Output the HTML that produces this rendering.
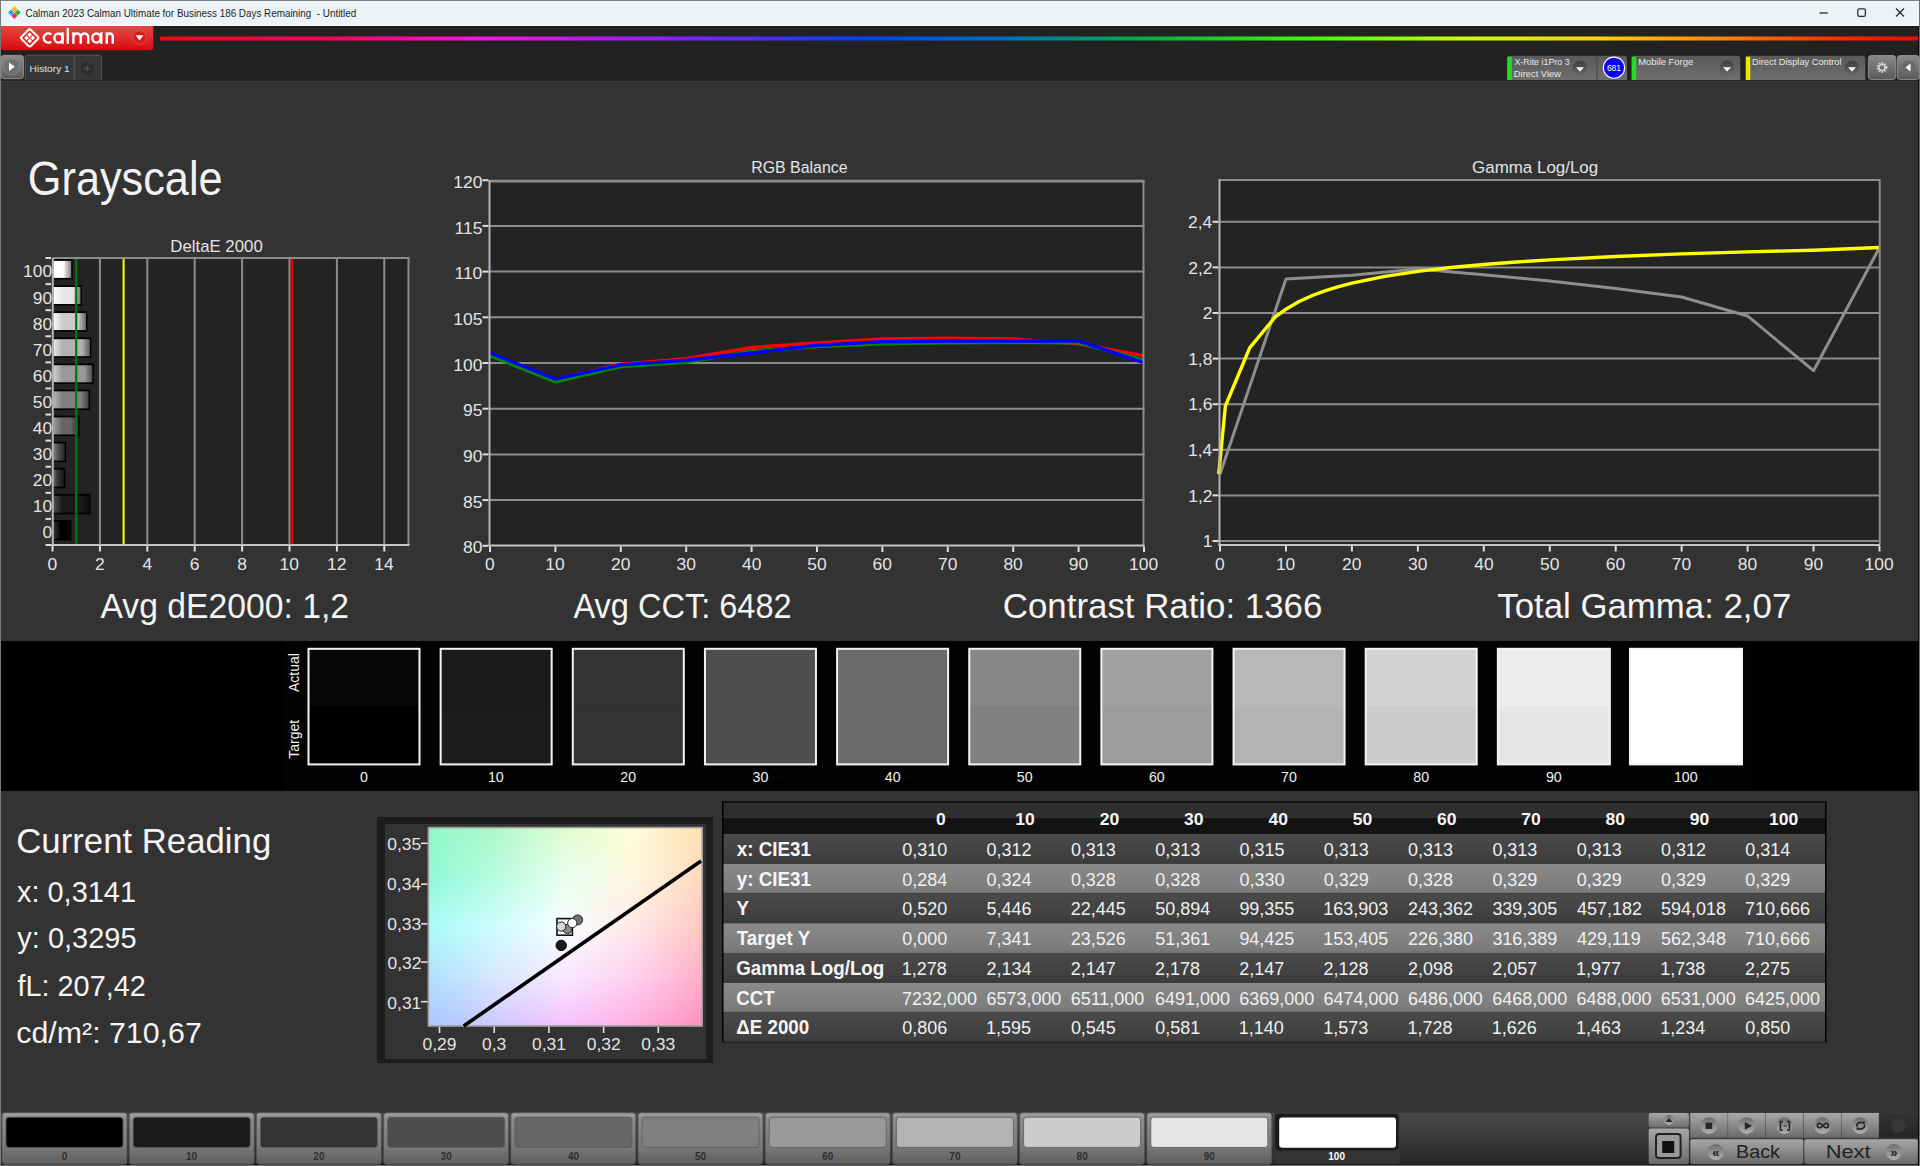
<!DOCTYPE html><html><head><meta charset="utf-8"><style>html,body{margin:0;padding:0;background:#333;overflow:hidden;width:1920px;height:1166px}svg{display:block;font-family:"Liberation Sans",sans-serif}</style></head><body><svg width="1920" height="1166" viewBox="0 0 1920 1166"><defs><linearGradient id="gRed" x1="0" y1="0" x2="0" y2="1"><stop offset="0" stop-color="#e64646"/><stop offset="0.5" stop-color="#e02a2c"/><stop offset="1" stop-color="#d40a0c"/></linearGradient><linearGradient id="gRain" x1="0" y1="0" x2="1" y2="0"><stop offset="0" stop-color="#ff0010"/><stop offset="0.1" stop-color="#ff0060"/><stop offset="0.18" stop-color="#ff10e0"/><stop offset="0.3" stop-color="#8020ff"/><stop offset="0.4" stop-color="#0040ff"/><stop offset="0.48" stop-color="#0070c0"/><stop offset="0.56" stop-color="#00b040"/><stop offset="0.66" stop-color="#40ff00"/><stop offset="0.74" stop-color="#c8ff00"/><stop offset="0.82" stop-color="#ffd000"/><stop offset="0.89" stop-color="#ff8000"/><stop offset="0.95" stop-color="#ff3000"/><stop offset="1" stop-color="#ff0000"/></linearGradient><linearGradient id="gPlay" x1="0" y1="0" x2="0" y2="1"><stop offset="0" stop-color="#8a8a8a"/><stop offset="1" stop-color="#5e5e5e"/></linearGradient><linearGradient id="gDev" x1="0" y1="0" x2="0" y2="1"><stop offset="0" stop-color="#5a5a5a"/><stop offset="1" stop-color="#6e6e6e"/></linearGradient><linearGradient id="gDrop" x1="0" y1="0" x2="0" y2="1"><stop offset="0" stop-color="#3e3e3e"/><stop offset="1" stop-color="#6a6a6a"/></linearGradient><linearGradient id="gBtn" x1="0" y1="0" x2="0" y2="1"><stop offset="0" stop-color="#8a8a8a"/><stop offset="1" stop-color="#5a5a5a"/></linearGradient><linearGradient id="gBar100" x1="0" y1="0" x2="1" y2="0"><stop offset="0" stop-color="rgb(255,255,255)"/><stop offset="0.45" stop-color="rgb(255,255,255)"/><stop offset="0.5526977914453454" stop-color="rgb(255,255,255)"/><stop offset="1" stop-color="rgb(127,127,127)"/></linearGradient><linearGradient id="gBar90" x1="0" y1="0" x2="1" y2="0"><stop offset="0" stop-color="rgb(255,255,255)"/><stop offset="0.3316211854351974" stop-color="rgb(230,230,230)"/><stop offset="0.7052256129464912" stop-color="rgb(230,230,230)"/><stop offset="1" stop-color="rgb(115,115,115)"/></linearGradient><linearGradient id="gBar80" x1="0" y1="0" x2="1" y2="0"><stop offset="0" stop-color="rgb(255,255,255)"/><stop offset="0.2755807865075646" stop-color="rgb(204,204,204)"/><stop offset="0.7550393008821648" stop-color="rgb(204,204,204)"/><stop offset="1" stop-color="rgb(102,102,102)"/></linearGradient><linearGradient id="gBar70" x1="0" y1="0" x2="1" y2="0"><stop offset="0" stop-color="rgb(233,233,233)"/><stop offset="0.24599170187992322" stop-color="rgb(178,178,178)"/><stop offset="0.7813407094400683" stop-color="rgb(178,178,178)"/><stop offset="1" stop-color="rgb(89,89,89)"/></linearGradient><linearGradient id="gBar60" x1="0" y1="0" x2="1" y2="0"><stop offset="0" stop-color="rgb(208,208,208)"/><stop offset="0.2305044461746506" stop-color="rgb(153,153,153)"/><stop offset="0.7951071589558661" stop-color="rgb(153,153,153)"/><stop offset="1" stop-color="rgb(76,76,76)"/></linearGradient><linearGradient id="gBar50" x1="0" y1="0" x2="1" y2="0"><stop offset="0" stop-color="rgb(183,183,183)"/><stop offset="0.25489035466576787" stop-color="rgb(128,128,128)"/><stop offset="0.7734307958526507" stop-color="rgb(128,128,128)"/><stop offset="1" stop-color="rgb(64,64,64)"/></linearGradient><linearGradient id="gBar40" x1="0" y1="0" x2="1" y2="0"><stop offset="0" stop-color="rgb(157,157,157)"/><stop offset="0.36182359089812643" stop-color="rgb(102,102,102)"/><stop offset="0.6783790303127765" stop-color="rgb(102,102,102)"/><stop offset="1" stop-color="rgb(51,51,51)"/></linearGradient><linearGradient id="gBar30" x1="0" y1="0" x2="1" y2="0"><stop offset="0" stop-color="rgb(131,131,131)"/><stop offset="0.45" stop-color="rgb(76,76,76)"/><stop offset="0.46" stop-color="rgb(76,76,76)"/><stop offset="1" stop-color="rgb(38,38,38)"/></linearGradient><linearGradient id="gBar20" x1="0" y1="0" x2="1" y2="0"><stop offset="0" stop-color="rgb(106,106,106)"/><stop offset="0.45" stop-color="rgb(51,51,51)"/><stop offset="0.46" stop-color="rgb(51,51,51)"/><stop offset="1" stop-color="rgb(25,25,25)"/></linearGradient><linearGradient id="gBar10" x1="0" y1="0" x2="1" y2="0"><stop offset="0" stop-color="rgb(81,81,81)"/><stop offset="0.2511195747708534" stop-color="rgb(26,26,26)"/><stop offset="0.7767826002036858" stop-color="rgb(26,26,26)"/><stop offset="1" stop-color="rgb(13,13,13)"/></linearGradient><linearGradient id="gBar0" x1="0" y1="0" x2="1" y2="0"><stop offset="0" stop-color="rgb(55,55,55)"/><stop offset="0.45" stop-color="rgb(0,0,0)"/><stop offset="0.5245057831984119" stop-color="rgb(0,0,0)"/><stop offset="1" stop-color="rgb(0,0,0)"/></linearGradient><linearGradient id="gCie0" x1="0" y1="0" x2="1" y2="0"><stop offset="0.0" stop-color="rgb(143,248,200)"/><stop offset="0.25" stop-color="rgb(176,248,201)"/><stop offset="0.5" stop-color="rgb(224,252,209)"/><stop offset="0.75" stop-color="rgb(255,252,216)"/><stop offset="1.0" stop-color="rgb(255,224,176)"/></linearGradient><linearGradient id="gCie1" x1="0" y1="0" x2="1" y2="0"><stop offset="0.0" stop-color="rgb(143,248,202)"/><stop offset="0.25" stop-color="rgb(177,248,203)"/><stop offset="0.5" stop-color="rgb(225,252,211)"/><stop offset="0.75" stop-color="rgb(255,252,217)"/><stop offset="1.0" stop-color="rgb(255,223,178)"/></linearGradient><linearGradient id="gCie2" x1="0" y1="0" x2="1" y2="0"><stop offset="0.0" stop-color="rgb(143,248,203)"/><stop offset="0.25" stop-color="rgb(178,249,205)"/><stop offset="0.5" stop-color="rgb(226,253,214)"/><stop offset="0.75" stop-color="rgb(255,251,218)"/><stop offset="1.0" stop-color="rgb(255,222,179)"/></linearGradient><linearGradient id="gCie3" x1="0" y1="0" x2="1" y2="0"><stop offset="0.0" stop-color="rgb(143,248,204)"/><stop offset="0.25" stop-color="rgb(178,249,206)"/><stop offset="0.5" stop-color="rgb(226,253,217)"/><stop offset="0.75" stop-color="rgb(255,251,218)"/><stop offset="1.0" stop-color="rgb(255,222,180)"/></linearGradient><linearGradient id="gCie4" x1="0" y1="0" x2="1" y2="0"><stop offset="0.0" stop-color="rgb(143,248,206)"/><stop offset="0.25" stop-color="rgb(179,249,208)"/><stop offset="0.5" stop-color="rgb(227,253,219)"/><stop offset="0.75" stop-color="rgb(255,251,219)"/><stop offset="1.0" stop-color="rgb(255,221,182)"/></linearGradient><linearGradient id="gCie5" x1="0" y1="0" x2="1" y2="0"><stop offset="0.0" stop-color="rgb(143,248,207)"/><stop offset="0.25" stop-color="rgb(179,250,210)"/><stop offset="0.5" stop-color="rgb(227,253,222)"/><stop offset="0.75" stop-color="rgb(255,250,219)"/><stop offset="1.0" stop-color="rgb(255,221,183)"/></linearGradient><linearGradient id="gCie6" x1="0" y1="0" x2="1" y2="0"><stop offset="0.0" stop-color="rgb(144,248,208)"/><stop offset="0.25" stop-color="rgb(180,250,212)"/><stop offset="0.5" stop-color="rgb(228,254,224)"/><stop offset="0.75" stop-color="rgb(255,250,220)"/><stop offset="1.0" stop-color="rgb(255,220,184)"/></linearGradient><linearGradient id="gCie7" x1="0" y1="0" x2="1" y2="0"><stop offset="0.0" stop-color="rgb(144,248,209)"/><stop offset="0.25" stop-color="rgb(181,250,214)"/><stop offset="0.5" stop-color="rgb(229,254,227)"/><stop offset="0.75" stop-color="rgb(255,250,221)"/><stop offset="1.0" stop-color="rgb(255,219,185)"/></linearGradient><linearGradient id="gCie8" x1="0" y1="0" x2="1" y2="0"><stop offset="0.0" stop-color="rgb(144,248,211)"/><stop offset="0.25" stop-color="rgb(181,251,216)"/><stop offset="0.5" stop-color="rgb(229,254,230)"/><stop offset="0.75" stop-color="rgb(255,249,221)"/><stop offset="1.0" stop-color="rgb(255,219,187)"/></linearGradient><linearGradient id="gCie9" x1="0" y1="0" x2="1" y2="0"><stop offset="0.0" stop-color="rgb(144,248,212)"/><stop offset="0.25" stop-color="rgb(182,251,218)"/><stop offset="0.5" stop-color="rgb(230,254,232)"/><stop offset="0.75" stop-color="rgb(255,249,222)"/><stop offset="1.0" stop-color="rgb(255,218,188)"/></linearGradient><linearGradient id="gCie10" x1="0" y1="0" x2="1" y2="0"><stop offset="0.0" stop-color="rgb(144,248,213)"/><stop offset="0.25" stop-color="rgb(183,251,220)"/><stop offset="0.5" stop-color="rgb(231,255,235)"/><stop offset="0.75" stop-color="rgb(255,249,223)"/><stop offset="1.0" stop-color="rgb(255,217,189)"/></linearGradient><linearGradient id="gCie11" x1="0" y1="0" x2="1" y2="0"><stop offset="0.0" stop-color="rgb(144,248,215)"/><stop offset="0.25" stop-color="rgb(183,252,222)"/><stop offset="0.5" stop-color="rgb(231,255,237)"/><stop offset="0.75" stop-color="rgb(255,248,223)"/><stop offset="1.0" stop-color="rgb(255,217,191)"/></linearGradient><linearGradient id="gCie12" x1="0" y1="0" x2="1" y2="0"><stop offset="0.0" stop-color="rgb(144,248,216)"/><stop offset="0.25" stop-color="rgb(184,252,224)"/><stop offset="0.5" stop-color="rgb(232,255,240)"/><stop offset="0.75" stop-color="rgb(255,248,224)"/><stop offset="1.0" stop-color="rgb(255,216,192)"/></linearGradient><linearGradient id="gCie13" x1="0" y1="0" x2="1" y2="0"><stop offset="0.0" stop-color="rgb(146,248,218)"/><stop offset="0.25" stop-color="rgb(186,252,226)"/><stop offset="0.5" stop-color="rgb(233,255,241)"/><stop offset="0.75" stop-color="rgb(255,247,225)"/><stop offset="1.0" stop-color="rgb(255,215,192)"/></linearGradient><linearGradient id="gCie14" x1="0" y1="0" x2="1" y2="0"><stop offset="0.0" stop-color="rgb(148,249,221)"/><stop offset="0.25" stop-color="rgb(188,252,229)"/><stop offset="0.5" stop-color="rgb(235,255,242)"/><stop offset="0.75" stop-color="rgb(255,245,225)"/><stop offset="1.0" stop-color="rgb(255,213,192)"/></linearGradient><linearGradient id="gCie15" x1="0" y1="0" x2="1" y2="0"><stop offset="0.0" stop-color="rgb(150,249,224)"/><stop offset="0.25" stop-color="rgb(190,252,231)"/><stop offset="0.5" stop-color="rgb(236,255,244)"/><stop offset="0.75" stop-color="rgb(255,244,226)"/><stop offset="1.0" stop-color="rgb(255,212,192)"/></linearGradient><linearGradient id="gCie16" x1="0" y1="0" x2="1" y2="0"><stop offset="0.0" stop-color="rgb(152,249,226)"/><stop offset="0.25" stop-color="rgb(192,252,234)"/><stop offset="0.5" stop-color="rgb(237,255,245)"/><stop offset="0.75" stop-color="rgb(255,243,227)"/><stop offset="1.0" stop-color="rgb(255,211,192)"/></linearGradient><linearGradient id="gCie17" x1="0" y1="0" x2="1" y2="0"><stop offset="0.0" stop-color="rgb(154,250,229)"/><stop offset="0.25" stop-color="rgb(194,252,236)"/><stop offset="0.5" stop-color="rgb(238,255,246)"/><stop offset="0.75" stop-color="rgb(255,242,227)"/><stop offset="1.0" stop-color="rgb(255,210,192)"/></linearGradient><linearGradient id="gCie18" x1="0" y1="0" x2="1" y2="0"><stop offset="0.0" stop-color="rgb(156,250,231)"/><stop offset="0.25" stop-color="rgb(196,252,239)"/><stop offset="0.5" stop-color="rgb(240,255,247)"/><stop offset="0.75" stop-color="rgb(255,240,228)"/><stop offset="1.0" stop-color="rgb(255,208,192)"/></linearGradient><linearGradient id="gCie19" x1="0" y1="0" x2="1" y2="0"><stop offset="0.0" stop-color="rgb(157,250,234)"/><stop offset="0.25" stop-color="rgb(197,252,241)"/><stop offset="0.5" stop-color="rgb(241,255,248)"/><stop offset="0.75" stop-color="rgb(255,239,228)"/><stop offset="1.0" stop-color="rgb(255,207,192)"/></linearGradient><linearGradient id="gCie20" x1="0" y1="0" x2="1" y2="0"><stop offset="0.0" stop-color="rgb(159,251,237)"/><stop offset="0.25" stop-color="rgb(199,252,244)"/><stop offset="0.5" stop-color="rgb(242,255,250)"/><stop offset="0.75" stop-color="rgb(255,238,229)"/><stop offset="1.0" stop-color="rgb(255,206,192)"/></linearGradient><linearGradient id="gCie21" x1="0" y1="0" x2="1" y2="0"><stop offset="0.0" stop-color="rgb(161,251,239)"/><stop offset="0.25" stop-color="rgb(201,252,246)"/><stop offset="0.5" stop-color="rgb(244,255,251)"/><stop offset="0.75" stop-color="rgb(255,236,230)"/><stop offset="1.0" stop-color="rgb(255,204,192)"/></linearGradient><linearGradient id="gCie22" x1="0" y1="0" x2="1" y2="0"><stop offset="0.0" stop-color="rgb(163,251,242)"/><stop offset="0.25" stop-color="rgb(203,252,249)"/><stop offset="0.5" stop-color="rgb(245,255,252)"/><stop offset="0.75" stop-color="rgb(255,235,230)"/><stop offset="1.0" stop-color="rgb(255,203,192)"/></linearGradient><linearGradient id="gCie23" x1="0" y1="0" x2="1" y2="0"><stop offset="0.0" stop-color="rgb(165,252,244)"/><stop offset="0.25" stop-color="rgb(205,252,251)"/><stop offset="0.5" stop-color="rgb(246,255,253)"/><stop offset="0.75" stop-color="rgb(255,234,231)"/><stop offset="1.0" stop-color="rgb(255,202,192)"/></linearGradient><linearGradient id="gCie24" x1="0" y1="0" x2="1" y2="0"><stop offset="0.0" stop-color="rgb(167,252,247)"/><stop offset="0.25" stop-color="rgb(207,252,254)"/><stop offset="0.5" stop-color="rgb(247,255,254)"/><stop offset="0.75" stop-color="rgb(255,233,232)"/><stop offset="1.0" stop-color="rgb(255,201,192)"/></linearGradient><linearGradient id="gCie25" x1="0" y1="0" x2="1" y2="0"><stop offset="0.0" stop-color="rgb(168,251,248)"/><stop offset="0.25" stop-color="rgb(208,251,255)"/><stop offset="0.5" stop-color="rgb(248,254,255)"/><stop offset="0.75" stop-color="rgb(255,231,232)"/><stop offset="1.0" stop-color="rgb(255,199,192)"/></linearGradient><linearGradient id="gCie26" x1="0" y1="0" x2="1" y2="0"><stop offset="0.0" stop-color="rgb(169,248,249)"/><stop offset="0.25" stop-color="rgb(209,250,255)"/><stop offset="0.5" stop-color="rgb(248,252,255)"/><stop offset="0.75" stop-color="rgb(255,229,233)"/><stop offset="1.0" stop-color="rgb(255,197,193)"/></linearGradient><linearGradient id="gCie27" x1="0" y1="0" x2="1" y2="0"><stop offset="0.0" stop-color="rgb(170,246,249)"/><stop offset="0.25" stop-color="rgb(210,248,255)"/><stop offset="0.5" stop-color="rgb(248,250,255)"/><stop offset="0.75" stop-color="rgb(255,227,234)"/><stop offset="1.0" stop-color="rgb(255,195,194)"/></linearGradient><linearGradient id="gCie28" x1="0" y1="0" x2="1" y2="0"><stop offset="0.0" stop-color="rgb(170,244,250)"/><stop offset="0.25" stop-color="rgb(210,246,255)"/><stop offset="0.5" stop-color="rgb(248,248,255)"/><stop offset="0.75" stop-color="rgb(255,225,234)"/><stop offset="1.0" stop-color="rgb(255,193,194)"/></linearGradient><linearGradient id="gCie29" x1="0" y1="0" x2="1" y2="0"><stop offset="0.0" stop-color="rgb(171,242,251)"/><stop offset="0.25" stop-color="rgb(211,245,255)"/><stop offset="0.5" stop-color="rgb(248,247,255)"/><stop offset="0.75" stop-color="rgb(255,223,235)"/><stop offset="1.0" stop-color="rgb(255,191,195)"/></linearGradient><linearGradient id="gCie30" x1="0" y1="0" x2="1" y2="0"><stop offset="0.0" stop-color="rgb(172,239,251)"/><stop offset="0.25" stop-color="rgb(212,243,255)"/><stop offset="0.5" stop-color="rgb(248,245,255)"/><stop offset="0.75" stop-color="rgb(255,221,236)"/><stop offset="1.0" stop-color="rgb(255,189,196)"/></linearGradient><linearGradient id="gCie31" x1="0" y1="0" x2="1" y2="0"><stop offset="0.0" stop-color="rgb(172,237,252)"/><stop offset="0.25" stop-color="rgb(212,241,255)"/><stop offset="0.5" stop-color="rgb(248,243,255)"/><stop offset="0.75" stop-color="rgb(255,219,236)"/><stop offset="1.0" stop-color="rgb(255,187,196)"/></linearGradient><linearGradient id="gCie32" x1="0" y1="0" x2="1" y2="0"><stop offset="0.0" stop-color="rgb(173,235,252)"/><stop offset="0.25" stop-color="rgb(213,240,255)"/><stop offset="0.5" stop-color="rgb(248,241,255)"/><stop offset="0.75" stop-color="rgb(255,217,237)"/><stop offset="1.0" stop-color="rgb(255,185,197)"/></linearGradient><linearGradient id="gCie33" x1="0" y1="0" x2="1" y2="0"><stop offset="0.0" stop-color="rgb(174,233,253)"/><stop offset="0.25" stop-color="rgb(214,238,255)"/><stop offset="0.5" stop-color="rgb(248,239,255)"/><stop offset="0.75" stop-color="rgb(255,215,238)"/><stop offset="1.0" stop-color="rgb(255,183,198)"/></linearGradient><linearGradient id="gCie34" x1="0" y1="0" x2="1" y2="0"><stop offset="0.0" stop-color="rgb(174,230,253)"/><stop offset="0.25" stop-color="rgb(214,237,255)"/><stop offset="0.5" stop-color="rgb(248,237,255)"/><stop offset="0.75" stop-color="rgb(255,214,238)"/><stop offset="1.0" stop-color="rgb(255,182,198)"/></linearGradient><linearGradient id="gCie35" x1="0" y1="0" x2="1" y2="0"><stop offset="0.0" stop-color="rgb(175,228,254)"/><stop offset="0.25" stop-color="rgb(215,235,255)"/><stop offset="0.5" stop-color="rgb(248,235,255)"/><stop offset="0.75" stop-color="rgb(255,212,239)"/><stop offset="1.0" stop-color="rgb(255,180,199)"/></linearGradient><linearGradient id="gCie36" x1="0" y1="0" x2="1" y2="0"><stop offset="0.0" stop-color="rgb(175,226,255)"/><stop offset="0.25" stop-color="rgb(215,233,255)"/><stop offset="0.5" stop-color="rgb(248,234,255)"/><stop offset="0.75" stop-color="rgb(255,210,239)"/><stop offset="1.0" stop-color="rgb(255,178,199)"/></linearGradient><linearGradient id="gCie37" x1="0" y1="0" x2="1" y2="0"><stop offset="0.0" stop-color="rgb(176,224,255)"/><stop offset="0.25" stop-color="rgb(216,232,255)"/><stop offset="0.5" stop-color="rgb(248,232,255)"/><stop offset="0.75" stop-color="rgb(255,208,240)"/><stop offset="1.0" stop-color="rgb(255,176,200)"/></linearGradient><linearGradient id="gCie38" x1="0" y1="0" x2="1" y2="0"><stop offset="0.0" stop-color="rgb(175,222,255)"/><stop offset="0.25" stop-color="rgb(215,229,255)"/><stop offset="0.5" stop-color="rgb(248,228,255)"/><stop offset="0.75" stop-color="rgb(255,205,239)"/><stop offset="1.0" stop-color="rgb(255,173,199)"/></linearGradient><linearGradient id="gCie39" x1="0" y1="0" x2="1" y2="0"><stop offset="0.0" stop-color="rgb(175,220,255)"/><stop offset="0.25" stop-color="rgb(215,226,255)"/><stop offset="0.5" stop-color="rgb(248,225,255)"/><stop offset="0.75" stop-color="rgb(255,202,237)"/><stop offset="1.0" stop-color="rgb(255,170,199)"/></linearGradient><linearGradient id="gCie40" x1="0" y1="0" x2="1" y2="0"><stop offset="0.0" stop-color="rgb(174,218,255)"/><stop offset="0.25" stop-color="rgb(214,224,255)"/><stop offset="0.5" stop-color="rgb(248,222,255)"/><stop offset="0.75" stop-color="rgb(255,200,236)"/><stop offset="1.0" stop-color="rgb(255,168,198)"/></linearGradient><linearGradient id="gCie41" x1="0" y1="0" x2="1" y2="0"><stop offset="0.0" stop-color="rgb(173,216,255)"/><stop offset="0.25" stop-color="rgb(213,221,255)"/><stop offset="0.5" stop-color="rgb(248,219,255)"/><stop offset="0.75" stop-color="rgb(255,197,235)"/><stop offset="1.0" stop-color="rgb(255,165,197)"/></linearGradient><linearGradient id="gCie42" x1="0" y1="0" x2="1" y2="0"><stop offset="0.0" stop-color="rgb(173,214,255)"/><stop offset="0.25" stop-color="rgb(213,219,255)"/><stop offset="0.5" stop-color="rgb(248,215,255)"/><stop offset="0.75" stop-color="rgb(255,195,233)"/><stop offset="1.0" stop-color="rgb(255,163,197)"/></linearGradient><linearGradient id="gCie43" x1="0" y1="0" x2="1" y2="0"><stop offset="0.0" stop-color="rgb(172,212,255)"/><stop offset="0.25" stop-color="rgb(212,216,255)"/><stop offset="0.5" stop-color="rgb(248,212,255)"/><stop offset="0.75" stop-color="rgb(255,192,232)"/><stop offset="1.0" stop-color="rgb(255,160,196)"/></linearGradient><linearGradient id="gCie44" x1="0" y1="0" x2="1" y2="0"><stop offset="0.0" stop-color="rgb(171,210,255)"/><stop offset="0.25" stop-color="rgb(211,214,255)"/><stop offset="0.5" stop-color="rgb(248,209,255)"/><stop offset="0.75" stop-color="rgb(255,190,231)"/><stop offset="1.0" stop-color="rgb(255,158,195)"/></linearGradient><linearGradient id="gCie45" x1="0" y1="0" x2="1" y2="0"><stop offset="0.0" stop-color="rgb(171,208,255)"/><stop offset="0.25" stop-color="rgb(211,211,255)"/><stop offset="0.5" stop-color="rgb(248,206,255)"/><stop offset="0.75" stop-color="rgb(255,187,229)"/><stop offset="1.0" stop-color="rgb(255,155,195)"/></linearGradient><linearGradient id="gCie46" x1="0" y1="0" x2="1" y2="0"><stop offset="0.0" stop-color="rgb(170,206,255)"/><stop offset="0.25" stop-color="rgb(210,208,255)"/><stop offset="0.5" stop-color="rgb(248,202,255)"/><stop offset="0.75" stop-color="rgb(255,184,228)"/><stop offset="1.0" stop-color="rgb(255,152,194)"/></linearGradient><linearGradient id="gCie47" x1="0" y1="0" x2="1" y2="0"><stop offset="0.0" stop-color="rgb(169,204,255)"/><stop offset="0.25" stop-color="rgb(209,206,255)"/><stop offset="0.5" stop-color="rgb(248,199,255)"/><stop offset="0.75" stop-color="rgb(255,182,227)"/><stop offset="1.0" stop-color="rgb(255,150,193)"/></linearGradient><linearGradient id="gCie48" x1="0" y1="0" x2="1" y2="0"><stop offset="0.0" stop-color="rgb(169,202,255)"/><stop offset="0.25" stop-color="rgb(209,203,255)"/><stop offset="0.5" stop-color="rgb(248,196,255)"/><stop offset="0.75" stop-color="rgb(255,179,226)"/><stop offset="1.0" stop-color="rgb(255,147,193)"/></linearGradient><linearGradient id="gCie49" x1="0" y1="0" x2="1" y2="0"><stop offset="0.0" stop-color="rgb(168,200,255)"/><stop offset="0.25" stop-color="rgb(208,201,255)"/><stop offset="0.5" stop-color="rgb(248,193,255)"/><stop offset="0.75" stop-color="rgb(255,177,224)"/><stop offset="1.0" stop-color="rgb(255,145,192)"/></linearGradient><linearGradient id="gRowD" x1="0" y1="0" x2="0" y2="1"><stop offset="0" stop-color="#4a4a4a"/><stop offset="0.9" stop-color="#3e3e3e"/><stop offset="1" stop-color="#363636"/></linearGradient><linearGradient id="gRowL" x1="0" y1="0" x2="0" y2="1"><stop offset="0" stop-color="#8a8a8a"/><stop offset="0.9" stop-color="#7b7b7b"/><stop offset="1" stop-color="#707070"/></linearGradient><linearGradient id="gTool" x1="0" y1="0" x2="0" y2="1"><stop offset="0" stop-color="#4a4a4a"/><stop offset="0.5" stop-color="#3a3a3a"/><stop offset="1" stop-color="#262626"/></linearGradient><linearGradient id="gBtnBody" x1="0" y1="0" x2="0" y2="1"><stop offset="0" stop-color="#a4a4a4"/><stop offset="0.12" stop-color="#8c8c8c"/><stop offset="0.65" stop-color="#7a7a7a"/><stop offset="1" stop-color="#5e5e5e"/></linearGradient><linearGradient id="gCtl" x1="0" y1="0" x2="0" y2="1"><stop offset="0" stop-color="#a8a8a8"/><stop offset="1" stop-color="#6a6a6a"/></linearGradient><linearGradient id="gCirc" x1="0" y1="0" x2="0" y2="1"><stop offset="0" stop-color="#6e6e6e"/><stop offset="1" stop-color="#b0b0b0"/></linearGradient><linearGradient id="gDarkBox" x1="0" y1="0" x2="0" y2="1"><stop offset="0" stop-color="#343434"/><stop offset="1" stop-color="#242424"/></linearGradient></defs><rect x="0.00" y="0.00" width="1920.00" height="1166.00" fill="#333333"/>
<rect x="0.00" y="0.00" width="1920.00" height="26.00" fill="#ebf3f6"/>
<rect x="0.00" y="0.00" width="1920.00" height="1.10" fill="#7a7f81"/>
<rect x="0.00" y="1.30" width="1920.00" height="1.00" fill="#fafdfd"/>
<rect x="0.00" y="24.70" width="1920.00" height="1.10" fill="#fafdfd"/>
<rect x="0.00" y="0.00" width="1.00" height="1166.00" fill="#7a7a7a"/>
<rect x="1918.00" y="26.00" width="1.00" height="1140.00" fill="#0a0a0a"/>
<rect x="1919.00" y="0.00" width="1.00" height="1166.00" fill="#6e6e6e"/>
<rect x="12.20" y="7.00" width="4.4" height="4.4" fill="#f5c518" transform="rotate(45 14.40 9.20)"/>
<rect x="8.90" y="10.30" width="4.4" height="4.4" fill="#1ea7f0" transform="rotate(45 11.10 12.50)"/>
<rect x="15.50" y="10.30" width="4.4" height="4.4" fill="#22c03a" transform="rotate(45 17.70 12.50)"/>
<rect x="12.20" y="13.60" width="4.4" height="4.4" fill="#f0305a" transform="rotate(45 14.40 15.80)"/>
<text x="25.51" y="17.00" font-size="11.80" font-weight="normal" fill="#1e1e1e" textLength="330.74" lengthAdjust="spacingAndGlyphs" style="white-space:pre">Calman 2023 Calman Ultimate for Business 186 Days Remaining  - Untitled</text>
<rect x="1819.50" y="12.30" width="8.30" height="1.30" fill="#2a2a2a"/>
<rect x="1857.8" y="8.8" width="7.6" height="7.6" rx="1.6" fill="none" stroke="#2a2a2a" stroke-width="1.3"/>
<line x1="1896.00" y1="8.50" x2="1904.00" y2="16.50" stroke="#2a2a2a" stroke-width="1.20"/>
<line x1="1904.00" y1="8.50" x2="1896.00" y2="16.50" stroke="#2a2a2a" stroke-width="1.20"/>
<rect x="1.00" y="26.00" width="1917.00" height="54.80" fill="#222222"/>
<rect x="1.00" y="26.00" width="1917.00" height="1.00" fill="#131719"/>
<rect x="1.00" y="81.00" width="1917.00" height="1.20" fill="#373737"/>
<path d="M1,26 H153.3 V47.5 Q153.3,50.3 150.5,50.3 H3.5 Q1,50.3 1,47.5 Z" fill="url(#gRed)"/>
<g transform="translate(29.7 37.9) rotate(45)"><rect x="-6.6" y="-6.6" width="13.2" height="13.2" rx="2" fill="none" stroke="#fff" stroke-width="2"/><rect x="-3.8" y="-3.8" width="3.3" height="3.3" fill="#fff"/><rect x="0.5" y="-3.8" width="3.3" height="3.3" fill="#fff"/><rect x="-3.8" y="0.5" width="3.3" height="3.3" fill="#fff"/><rect x="0.5" y="0.5" width="3.3" height="3.3" fill="#fff"/></g>
<g fill="none" stroke="#ffffff" stroke-width="2.4"><path d="M51.26,34.51 A4.6,4.6 0 1 0 51.26,41.55"/><ellipse cx="58.45" cy="38.03" rx="4.1" ry="4.6"/><path d="M62.55,32.25 V43.8"/><path d="M67.8,27.9 V43.8"/><path d="M73.4,32.25 V43.8 M73.4,37.15 A3.7,3.7 0 0 1 80.8,37.15 V43.8 M80.8,37.15 A3.7,3.7 0 0 1 88.2,37.15 V43.8"/><ellipse cx="96.45" cy="38.03" rx="4.2" ry="4.6"/><path d="M101.3,32.25 V43.8"/><path d="M106.8,32.25 V43.8 M106.8,36.45 A3,3 0 0 1 112.8,36.45 V43.8"/></g>
<circle cx="139.5" cy="37.5" r="6.8" fill="#d81c1e" stroke="#e85050" stroke-width="0.8"/>
<path d="M135.6,35.3 H143.4 L139.5,40.4 Z" fill="#ffffff"/>
<rect x="160.00" y="36.50" width="1758.00" height="4.00" fill="url(#gRain)"/>
<rect x="1" y="55.3" width="22.5" height="23.4" rx="3" fill="url(#gPlay)" stroke="#9a9a9a" stroke-width="0.8"/>
<circle cx="11.5" cy="66.8" r="8" fill="#707070" stroke="#858585" stroke-width="0.8"/>
<path d="M9,62.5 L14.8,66.8 L9,71.1 Z" fill="#ffffff"/>
<path d="M25.3,80 V58 Q25.3,55.3 28,55.3 H99 Q101.7,55.3 101.7,58 V80" fill="#363636" stroke="#555" stroke-width="1"/>
<line x1="74.30" y1="56.00" x2="74.30" y2="80.00" stroke="#555" stroke-width="1.20"/>
<text x="29.59" y="71.80" font-size="9.80" font-weight="normal" fill="#e0e0e0" textLength="40.18" lengthAdjust="spacingAndGlyphs">History 1</text>
<circle cx="87.2" cy="68.5" r="7.2" fill="#2e2e2e" stroke="#3c3c3c" stroke-width="0.8"/>
<path d="M87.2,65.5 V71.5 M84.2,68.5 H90.2" stroke="#555" stroke-width="1"/>
<path d="M1507.3,80.0 V58.7 Q1507.3,55.7 1510.3,55.7 H1624.0 Q1627.0,55.7 1627.0,58.7 V80.0 Z" fill="url(#gDev)"/>
<rect x="1507.30" y="56.70" width="4.50" height="23.30" fill="#22dd22"/>
<text x="1514.38" y="65.10" font-size="9.20" font-weight="normal" fill="#e8e8e8" textLength="55.28" lengthAdjust="spacingAndGlyphs">X-Rite i1Pro 3</text>
<text x="1513.85" y="76.60" font-size="9.20" font-weight="normal" fill="#e8e8e8" textLength="47.14" lengthAdjust="spacingAndGlyphs">Direct View</text>
<circle cx="1580.0" cy="68.0" r="7.5" fill="url(#gDrop)"/>
<path d="M1576.0,67.2 H1584.0 L1580.0,71.5 Z" fill="#ffffff"/>
<line x1="1597.00" y1="57.00" x2="1597.00" y2="80.00" stroke="#4a4a4a" stroke-width="1.20"/>
<circle cx="1614" cy="67.7" r="10.6" fill="#0a00ff" stroke="#ffffff" stroke-width="1.1"/>
<text x="1606.90" y="71.00" font-size="8.50" font-weight="normal" fill="#ffffff" textLength="14.18" lengthAdjust="spacingAndGlyphs">681</text>
<path d="M1631.7,80.0 V58.7 Q1631.7,55.7 1634.7,55.7 H1737.3 Q1740.3,55.7 1740.3,58.7 V80.0 Z" fill="url(#gDev)"/>
<rect x="1631.70" y="56.70" width="4.50" height="23.30" fill="#22dd22"/>
<text x="1638.25" y="65.30" font-size="9.20" font-weight="normal" fill="#e8e8e8" textLength="54.89" lengthAdjust="spacingAndGlyphs">Mobile Forge</text>
<circle cx="1727.0" cy="68.0" r="7.5" fill="url(#gDrop)"/>
<path d="M1723.0,67.2 H1731.0 L1727.0,71.5 Z" fill="#ffffff"/>
<path d="M1745.8,80.0 V58.7 Q1745.8,55.7 1748.8,55.7 H1862.3 Q1865.3,55.7 1865.3,58.7 V80.0 Z" fill="url(#gDev)"/>
<rect x="1745.80" y="56.70" width="4.50" height="23.30" fill="#e8e800"/>
<text x="1752.06" y="65.30" font-size="9.20" font-weight="normal" fill="#e8e8e8" textLength="89.54" lengthAdjust="spacingAndGlyphs">Direct Display Control</text>
<circle cx="1852.0" cy="68.0" r="7.5" fill="url(#gDrop)"/>
<path d="M1848.0,67.2 H1856.0 L1852.0,71.5 Z" fill="#ffffff"/>
<rect x="1868.4" y="55.5" width="27.4" height="24" rx="3" fill="url(#gBtn)" stroke="#9a9a9a" stroke-width="0.8"/>
<circle cx="1882" cy="67.5" r="4.2" fill="none" stroke="#d0d0d0" stroke-width="2.4" stroke-dasharray="1.6 1.1"/>
<circle cx="1882" cy="67.5" r="3" fill="none" stroke="#d0d0d0" stroke-width="1.4"/>
<rect x="1897.3" y="55.5" width="22" height="24" rx="3" fill="url(#gBtn)" stroke="#9a9a9a" stroke-width="0.8"/>
<circle cx="1908.5" cy="67.5" r="7" fill="#6a6a6a"/>
<path d="M1910.5,63.5 V71.5 L1905.5,67.5 Z" fill="#ffffff"/>
<text x="27.84" y="195.00" font-size="48.00" font-weight="normal" fill="#f2f2f2" textLength="194.78" lengthAdjust="spacingAndGlyphs">Grayscale</text>
<text x="170.26" y="251.90" font-size="16.80" font-weight="normal" fill="#e4e4e4" textLength="92.52" lengthAdjust="spacingAndGlyphs">DeltaE 2000</text>
<rect x="52.50" y="258.00" width="357.00" height="287.00" fill="#232323"/>
<line x1="99.90" y1="258.00" x2="99.90" y2="545.00" stroke="#8c8c8c" stroke-width="2.00"/>
<line x1="147.30" y1="258.00" x2="147.30" y2="545.00" stroke="#8c8c8c" stroke-width="2.00"/>
<line x1="194.70" y1="258.00" x2="194.70" y2="545.00" stroke="#8c8c8c" stroke-width="2.00"/>
<line x1="242.10" y1="258.00" x2="242.10" y2="545.00" stroke="#8c8c8c" stroke-width="2.00"/>
<line x1="289.50" y1="258.00" x2="289.50" y2="545.00" stroke="#8c8c8c" stroke-width="2.00"/>
<line x1="336.90" y1="258.00" x2="336.90" y2="545.00" stroke="#8c8c8c" stroke-width="2.00"/>
<line x1="384.30" y1="258.00" x2="384.30" y2="545.00" stroke="#8c8c8c" stroke-width="2.00"/>
<rect x="52.50" y="259.10" width="20.09" height="20.40" fill="#000000"/>
<rect x="53.30" y="260.90" width="17.89" height="17.00" fill="url(#gBar100)"/>
<text x="23.07" y="277.45" font-size="16.30" font-weight="normal" fill="#e4e4e4" textLength="29.10" lengthAdjust="spacingAndGlyphs">100</text>
<rect x="52.50" y="285.19" width="29.34" height="20.40" fill="#000000"/>
<rect x="53.30" y="286.99" width="27.14" height="17.00" fill="url(#gBar90)"/>
<text x="32.75" y="303.54" font-size="16.30" font-weight="normal" fill="#e4e4e4" textLength="19.40" lengthAdjust="spacingAndGlyphs">90</text>
<rect x="52.50" y="311.28" width="34.86" height="20.40" fill="#000000"/>
<rect x="53.30" y="313.08" width="32.66" height="17.00" fill="url(#gBar80)"/>
<text x="32.75" y="329.63" font-size="16.30" font-weight="normal" fill="#e4e4e4" textLength="19.40" lengthAdjust="spacingAndGlyphs">80</text>
<rect x="52.50" y="337.37" width="38.79" height="20.40" fill="#000000"/>
<rect x="53.30" y="339.17" width="36.59" height="17.00" fill="url(#gBar70)"/>
<text x="32.75" y="355.72" font-size="16.30" font-weight="normal" fill="#e4e4e4" textLength="19.40" lengthAdjust="spacingAndGlyphs">70</text>
<rect x="52.50" y="363.46" width="41.24" height="20.40" fill="#000000"/>
<rect x="53.30" y="365.26" width="39.04" height="17.00" fill="url(#gBar60)"/>
<text x="32.75" y="381.81" font-size="16.30" font-weight="normal" fill="#e4e4e4" textLength="19.40" lengthAdjust="spacingAndGlyphs">60</text>
<rect x="52.50" y="389.55" width="37.51" height="20.40" fill="#000000"/>
<rect x="53.30" y="391.35" width="35.31" height="17.00" fill="url(#gBar50)"/>
<text x="32.75" y="407.90" font-size="16.30" font-weight="normal" fill="#e4e4e4" textLength="19.40" lengthAdjust="spacingAndGlyphs">50</text>
<rect x="52.50" y="415.65" width="27.07" height="20.40" fill="#000000"/>
<rect x="53.30" y="417.45" width="24.87" height="17.00" fill="url(#gBar40)"/>
<text x="32.75" y="433.99" font-size="16.30" font-weight="normal" fill="#e4e4e4" textLength="19.40" lengthAdjust="spacingAndGlyphs">40</text>
<rect x="52.50" y="441.74" width="13.60" height="20.40" fill="#000000"/>
<rect x="53.30" y="443.54" width="11.40" height="17.00" fill="url(#gBar30)"/>
<text x="32.75" y="460.08" font-size="16.30" font-weight="normal" fill="#e4e4e4" textLength="19.40" lengthAdjust="spacingAndGlyphs">30</text>
<rect x="52.50" y="467.83" width="12.73" height="20.40" fill="#000000"/>
<rect x="53.30" y="469.63" width="10.53" height="17.00" fill="url(#gBar20)"/>
<text x="32.75" y="486.17" font-size="16.30" font-weight="normal" fill="#e4e4e4" textLength="19.40" lengthAdjust="spacingAndGlyphs">20</text>
<rect x="52.50" y="493.92" width="38.04" height="20.40" fill="#000000"/>
<rect x="53.30" y="495.72" width="35.84" height="17.00" fill="url(#gBar10)"/>
<text x="32.75" y="512.26" font-size="16.30" font-weight="normal" fill="#e4e4e4" textLength="19.40" lengthAdjust="spacingAndGlyphs">10</text>
<rect x="52.50" y="520.01" width="19.02" height="20.40" fill="#000000"/>
<rect x="53.30" y="521.81" width="16.82" height="17.00" fill="url(#gBar0)"/>
<text x="42.43" y="538.35" font-size="16.30" font-weight="normal" fill="#e4e4e4" textLength="9.70" lengthAdjust="spacingAndGlyphs">0</text>
<line x1="76.20" y1="258.00" x2="76.20" y2="545.00" stroke="#007c00" stroke-width="2.20"/>
<line x1="123.60" y1="258.00" x2="123.60" y2="545.00" stroke="#ffff00" stroke-width="2.00"/>
<line x1="291.87" y1="258.00" x2="291.87" y2="545.00" stroke="#e00000" stroke-width="2.50"/>
<line x1="52.50" y1="258.00" x2="409.50" y2="258.00" stroke="#8c8c8c" stroke-width="2.00"/>
<line x1="408.50" y1="258.00" x2="408.50" y2="545.00" stroke="#8c8c8c" stroke-width="2.00"/>
<line x1="52.80" y1="258.00" x2="52.80" y2="546.00" stroke="#b4b4b4" stroke-width="2.00"/>
<line x1="51.00" y1="545.00" x2="409.50" y2="545.00" stroke="#c4c4c4" stroke-width="2.00"/>
<line x1="45.50" y1="258.00" x2="51.00" y2="258.00" stroke="#dedede" stroke-width="2.00"/>
<line x1="45.50" y1="284.09" x2="51.00" y2="284.09" stroke="#dedede" stroke-width="2.00"/>
<line x1="45.50" y1="310.18" x2="51.00" y2="310.18" stroke="#dedede" stroke-width="2.00"/>
<line x1="45.50" y1="336.27" x2="51.00" y2="336.27" stroke="#dedede" stroke-width="2.00"/>
<line x1="45.50" y1="362.36" x2="51.00" y2="362.36" stroke="#dedede" stroke-width="2.00"/>
<line x1="45.50" y1="388.45" x2="51.00" y2="388.45" stroke="#dedede" stroke-width="2.00"/>
<line x1="45.50" y1="414.55" x2="51.00" y2="414.55" stroke="#dedede" stroke-width="2.00"/>
<line x1="45.50" y1="440.64" x2="51.00" y2="440.64" stroke="#dedede" stroke-width="2.00"/>
<line x1="45.50" y1="466.73" x2="51.00" y2="466.73" stroke="#dedede" stroke-width="2.00"/>
<line x1="45.50" y1="492.82" x2="51.00" y2="492.82" stroke="#dedede" stroke-width="2.00"/>
<line x1="45.50" y1="518.91" x2="51.00" y2="518.91" stroke="#dedede" stroke-width="2.00"/>
<line x1="45.50" y1="545.00" x2="51.00" y2="545.00" stroke="#dedede" stroke-width="2.00"/>
<line x1="52.50" y1="546.00" x2="52.50" y2="551.50" stroke="#dedede" stroke-width="2.00"/>
<text x="47.62" y="570.20" font-size="16.30" font-weight="normal" fill="#e4e4e4" textLength="9.70" lengthAdjust="spacingAndGlyphs">0</text>
<line x1="99.90" y1="546.00" x2="99.90" y2="551.50" stroke="#dedede" stroke-width="2.00"/>
<text x="95.06" y="570.20" font-size="16.30" font-weight="normal" fill="#e4e4e4" textLength="9.70" lengthAdjust="spacingAndGlyphs">2</text>
<line x1="147.30" y1="546.00" x2="147.30" y2="551.50" stroke="#dedede" stroke-width="2.00"/>
<text x="142.55" y="570.20" font-size="16.30" font-weight="normal" fill="#e4e4e4" textLength="9.70" lengthAdjust="spacingAndGlyphs">4</text>
<line x1="194.70" y1="546.00" x2="194.70" y2="551.50" stroke="#dedede" stroke-width="2.00"/>
<text x="189.77" y="570.20" font-size="16.30" font-weight="normal" fill="#e4e4e4" textLength="9.70" lengthAdjust="spacingAndGlyphs">6</text>
<line x1="242.10" y1="546.00" x2="242.10" y2="551.50" stroke="#dedede" stroke-width="2.00"/>
<text x="237.22" y="570.20" font-size="16.30" font-weight="normal" fill="#e4e4e4" textLength="9.70" lengthAdjust="spacingAndGlyphs">8</text>
<line x1="289.50" y1="546.00" x2="289.50" y2="551.50" stroke="#dedede" stroke-width="2.00"/>
<text x="279.47" y="570.20" font-size="16.30" font-weight="normal" fill="#e4e4e4" textLength="19.40" lengthAdjust="spacingAndGlyphs">10</text>
<line x1="336.90" y1="546.00" x2="336.90" y2="551.50" stroke="#dedede" stroke-width="2.00"/>
<text x="327.00" y="570.20" font-size="16.30" font-weight="normal" fill="#e4e4e4" textLength="19.40" lengthAdjust="spacingAndGlyphs">12</text>
<line x1="384.30" y1="546.00" x2="384.30" y2="551.50" stroke="#dedede" stroke-width="2.00"/>
<text x="374.23" y="570.20" font-size="16.30" font-weight="normal" fill="#e4e4e4" textLength="19.40" lengthAdjust="spacingAndGlyphs">14</text>
<text x="751.23" y="173.10" font-size="16.80" font-weight="normal" fill="#e4e4e4" textLength="96.37" lengthAdjust="spacingAndGlyphs">RGB Balance</text>
<rect x="490.00" y="180.00" width="654.50" height="365.50" fill="#232323"/>
<line x1="490.00" y1="500.10" x2="1144.50" y2="500.10" stroke="#8c8c8c" stroke-width="2.00"/>
<line x1="490.00" y1="454.40" x2="1144.50" y2="454.40" stroke="#8c8c8c" stroke-width="2.00"/>
<line x1="490.00" y1="408.70" x2="1144.50" y2="408.70" stroke="#8c8c8c" stroke-width="2.00"/>
<line x1="490.00" y1="363.00" x2="1144.50" y2="363.00" stroke="#8c8c8c" stroke-width="2.00"/>
<line x1="490.00" y1="317.30" x2="1144.50" y2="317.30" stroke="#8c8c8c" stroke-width="2.00"/>
<line x1="490.00" y1="271.60" x2="1144.50" y2="271.60" stroke="#8c8c8c" stroke-width="2.00"/>
<line x1="490.00" y1="225.90" x2="1144.50" y2="225.90" stroke="#8c8c8c" stroke-width="2.00"/>
<polyline points="490.00,353.86 555.40,379.45 620.80,364.19 686.20,358.80 751.60,347.46 817.00,342.89 882.40,339.05 947.80,338.14 1013.20,338.87 1078.60,343.81 1144.00,355.69" fill="none" stroke="#ff0000" stroke-width="3.4" stroke-linejoin="round"/>
<polyline points="490.00,355.69 555.40,381.92 620.80,366.66 686.20,362.36 751.60,351.12 817.00,346.55 882.40,343.81 947.80,342.89 1013.20,342.43 1078.60,342.89 1144.00,360.26" fill="none" stroke="#008c00" stroke-width="3.4" stroke-linejoin="round"/>
<polyline points="490.00,353.04 555.40,379.18 620.80,364.83 686.20,360.26 751.60,352.95 817.00,345.18 882.40,341.70 947.80,341.06 1013.20,341.06 1078.60,341.06 1144.00,362.54" fill="none" stroke="#0000ff" stroke-width="3.4" stroke-linejoin="round"/>
<line x1="490.00" y1="181.20" x2="1144.50" y2="181.20" stroke="#8c8c8c" stroke-width="2.80"/>
<line x1="1143.50" y1="180.00" x2="1143.50" y2="545.50" stroke="#8c8c8c" stroke-width="2.00"/>
<line x1="489.50" y1="180.00" x2="489.50" y2="546.50" stroke="#b4b4b4" stroke-width="2.00"/>
<line x1="488.50" y1="545.50" x2="1144.50" y2="545.50" stroke="#c4c4c4" stroke-width="2.00"/>
<line x1="482.50" y1="545.80" x2="488.50" y2="545.80" stroke="#dedede" stroke-width="2.00"/>
<text x="462.95" y="553.40" font-size="16.30" font-weight="normal" fill="#e4e4e4" textLength="19.40" lengthAdjust="spacingAndGlyphs">80</text>
<line x1="482.50" y1="500.10" x2="488.50" y2="500.10" stroke="#dedede" stroke-width="2.00"/>
<text x="463.04" y="507.70" font-size="16.30" font-weight="normal" fill="#e4e4e4" textLength="19.40" lengthAdjust="spacingAndGlyphs">85</text>
<line x1="482.50" y1="454.40" x2="488.50" y2="454.40" stroke="#dedede" stroke-width="2.00"/>
<text x="462.95" y="462.00" font-size="16.30" font-weight="normal" fill="#e4e4e4" textLength="19.40" lengthAdjust="spacingAndGlyphs">90</text>
<line x1="482.50" y1="408.70" x2="488.50" y2="408.70" stroke="#dedede" stroke-width="2.00"/>
<text x="463.04" y="416.30" font-size="16.30" font-weight="normal" fill="#e4e4e4" textLength="19.40" lengthAdjust="spacingAndGlyphs">95</text>
<line x1="482.50" y1="363.00" x2="488.50" y2="363.00" stroke="#dedede" stroke-width="2.00"/>
<text x="453.27" y="370.60" font-size="16.30" font-weight="normal" fill="#e4e4e4" textLength="29.10" lengthAdjust="spacingAndGlyphs">100</text>
<line x1="482.50" y1="317.30" x2="488.50" y2="317.30" stroke="#dedede" stroke-width="2.00"/>
<text x="453.36" y="324.90" font-size="16.30" font-weight="normal" fill="#e4e4e4" textLength="29.10" lengthAdjust="spacingAndGlyphs">105</text>
<line x1="482.50" y1="271.60" x2="488.50" y2="271.60" stroke="#dedede" stroke-width="2.00"/>
<text x="454.49" y="279.20" font-size="16.30" font-weight="normal" fill="#e4e4e4" textLength="27.81" lengthAdjust="spacingAndGlyphs">110</text>
<line x1="482.50" y1="225.90" x2="488.50" y2="225.90" stroke="#dedede" stroke-width="2.00"/>
<text x="454.58" y="233.50" font-size="16.30" font-weight="normal" fill="#e4e4e4" textLength="27.81" lengthAdjust="spacingAndGlyphs">115</text>
<line x1="482.50" y1="180.20" x2="488.50" y2="180.20" stroke="#dedede" stroke-width="2.00"/>
<text x="453.27" y="187.80" font-size="16.30" font-weight="normal" fill="#e4e4e4" textLength="29.10" lengthAdjust="spacingAndGlyphs">120</text>
<line x1="490.00" y1="546.50" x2="490.00" y2="552.00" stroke="#dedede" stroke-width="2.00"/>
<text x="485.12" y="570.30" font-size="16.30" font-weight="normal" fill="#e4e4e4" textLength="9.70" lengthAdjust="spacingAndGlyphs">0</text>
<line x1="555.40" y1="546.50" x2="555.40" y2="552.00" stroke="#dedede" stroke-width="2.00"/>
<text x="545.37" y="570.30" font-size="16.30" font-weight="normal" fill="#e4e4e4" textLength="19.40" lengthAdjust="spacingAndGlyphs">10</text>
<line x1="620.80" y1="546.50" x2="620.80" y2="552.00" stroke="#dedede" stroke-width="2.00"/>
<text x="610.99" y="570.30" font-size="16.30" font-weight="normal" fill="#e4e4e4" textLength="19.40" lengthAdjust="spacingAndGlyphs">20</text>
<line x1="686.20" y1="546.50" x2="686.20" y2="552.00" stroke="#dedede" stroke-width="2.00"/>
<text x="676.48" y="570.30" font-size="16.30" font-weight="normal" fill="#e4e4e4" textLength="19.40" lengthAdjust="spacingAndGlyphs">30</text>
<line x1="751.60" y1="546.50" x2="751.60" y2="552.00" stroke="#dedede" stroke-width="2.00"/>
<text x="742.05" y="570.30" font-size="16.30" font-weight="normal" fill="#e4e4e4" textLength="19.40" lengthAdjust="spacingAndGlyphs">40</text>
<line x1="817.00" y1="546.50" x2="817.00" y2="552.00" stroke="#dedede" stroke-width="2.00"/>
<text x="807.28" y="570.30" font-size="16.30" font-weight="normal" fill="#e4e4e4" textLength="19.40" lengthAdjust="spacingAndGlyphs">50</text>
<line x1="882.40" y1="546.50" x2="882.40" y2="552.00" stroke="#dedede" stroke-width="2.00"/>
<text x="872.59" y="570.30" font-size="16.30" font-weight="normal" fill="#e4e4e4" textLength="19.40" lengthAdjust="spacingAndGlyphs">60</text>
<line x1="947.80" y1="546.50" x2="947.80" y2="552.00" stroke="#dedede" stroke-width="2.00"/>
<text x="937.99" y="570.30" font-size="16.30" font-weight="normal" fill="#e4e4e4" textLength="19.40" lengthAdjust="spacingAndGlyphs">70</text>
<line x1="1013.20" y1="546.50" x2="1013.20" y2="552.00" stroke="#dedede" stroke-width="2.00"/>
<text x="1003.43" y="570.30" font-size="16.30" font-weight="normal" fill="#e4e4e4" textLength="19.40" lengthAdjust="spacingAndGlyphs">80</text>
<line x1="1078.60" y1="546.50" x2="1078.60" y2="552.00" stroke="#dedede" stroke-width="2.00"/>
<text x="1068.83" y="570.30" font-size="16.30" font-weight="normal" fill="#e4e4e4" textLength="19.40" lengthAdjust="spacingAndGlyphs">90</text>
<line x1="1144.00" y1="546.50" x2="1144.00" y2="552.00" stroke="#dedede" stroke-width="2.00"/>
<text x="1129.13" y="570.30" font-size="16.30" font-weight="normal" fill="#e4e4e4" textLength="29.10" lengthAdjust="spacingAndGlyphs">100</text>
<text x="1472.05" y="173.00" font-size="16.80" font-weight="normal" fill="#e4e4e4" textLength="126.13" lengthAdjust="spacingAndGlyphs">Gamma Log/Log</text>
<rect x="1220.00" y="179.00" width="660.00" height="366.00" fill="#232323"/>
<line x1="1220.00" y1="541.00" x2="1880.00" y2="541.00" stroke="#8c8c8c" stroke-width="2.00"/>
<line x1="1220.00" y1="495.40" x2="1880.00" y2="495.40" stroke="#8c8c8c" stroke-width="2.00"/>
<line x1="1220.00" y1="449.80" x2="1880.00" y2="449.80" stroke="#8c8c8c" stroke-width="2.00"/>
<line x1="1220.00" y1="404.20" x2="1880.00" y2="404.20" stroke="#8c8c8c" stroke-width="2.00"/>
<line x1="1220.00" y1="358.60" x2="1880.00" y2="358.60" stroke="#8c8c8c" stroke-width="2.00"/>
<line x1="1220.00" y1="313.00" x2="1880.00" y2="313.00" stroke="#8c8c8c" stroke-width="2.00"/>
<line x1="1220.00" y1="267.40" x2="1880.00" y2="267.40" stroke="#8c8c8c" stroke-width="2.00"/>
<line x1="1220.00" y1="221.80" x2="1880.00" y2="221.80" stroke="#8c8c8c" stroke-width="2.00"/>
<polyline points="1220.00,474.20 1285.95,279.03 1351.90,275.15 1417.85,269.00 1483.80,274.70 1549.75,281.08 1615.70,288.60 1681.65,297.04 1747.60,315.96 1813.55,370.68 1879.50,247.56" fill="none" stroke="#8e8e8e" stroke-width="3" stroke-linejoin="round"/>
<polyline points="1218.68,474.20 1225.41,406.02 1249.68,347.88 1275.07,317.23 1285.95,309.17 1299.14,301.55 1312.33,295.52 1325.52,290.62 1338.71,286.54 1351.90,283.07 1384.88,276.32 1417.85,271.36 1450.83,267.53 1483.80,264.47 1516.78,261.95 1549.75,259.84 1615.70,256.49 1681.65,253.92 1747.60,251.88 1813.55,250.21 1879.50,247.56" fill="none" stroke="#ffff00" stroke-width="3.4" stroke-linejoin="round"/>
<line x1="1220.00" y1="180.00" x2="1880.00" y2="180.00" stroke="#8c8c8c" stroke-width="2.00"/>
<line x1="1879.70" y1="179.00" x2="1879.70" y2="545.00" stroke="#8c8c8c" stroke-width="2.00"/>
<line x1="1219.50" y1="179.00" x2="1219.50" y2="546.00" stroke="#b4b4b4" stroke-width="2.00"/>
<line x1="1218.50" y1="545.00" x2="1880.00" y2="545.00" stroke="#c4c4c4" stroke-width="2.00"/>
<line x1="1212.50" y1="541.00" x2="1218.50" y2="541.00" stroke="#dedede" stroke-width="2.00"/>
<text x="1202.81" y="547.20" font-size="16.30" font-weight="normal" fill="#e4e4e4" textLength="9.70" lengthAdjust="spacingAndGlyphs">1</text>
<line x1="1212.50" y1="495.40" x2="1218.50" y2="495.40" stroke="#dedede" stroke-width="2.00"/>
<text x="1188.33" y="501.60" font-size="16.30" font-weight="normal" fill="#e4e4e4" textLength="24.25" lengthAdjust="spacingAndGlyphs">1,2</text>
<line x1="1212.50" y1="449.80" x2="1218.50" y2="449.80" stroke="#dedede" stroke-width="2.00"/>
<text x="1187.98" y="456.00" font-size="16.30" font-weight="normal" fill="#e4e4e4" textLength="24.25" lengthAdjust="spacingAndGlyphs">1,4</text>
<line x1="1212.50" y1="404.20" x2="1218.50" y2="404.20" stroke="#dedede" stroke-width="2.00"/>
<text x="1188.15" y="410.40" font-size="16.30" font-weight="normal" fill="#e4e4e4" textLength="24.25" lengthAdjust="spacingAndGlyphs">1,6</text>
<line x1="1212.50" y1="358.60" x2="1218.50" y2="358.60" stroke="#dedede" stroke-width="2.00"/>
<text x="1188.15" y="364.80" font-size="16.30" font-weight="normal" fill="#e4e4e4" textLength="24.25" lengthAdjust="spacingAndGlyphs">1,8</text>
<line x1="1212.50" y1="313.00" x2="1218.50" y2="313.00" stroke="#dedede" stroke-width="2.00"/>
<text x="1202.89" y="319.20" font-size="16.30" font-weight="normal" fill="#e4e4e4" textLength="9.70" lengthAdjust="spacingAndGlyphs">2</text>
<line x1="1212.50" y1="267.40" x2="1218.50" y2="267.40" stroke="#dedede" stroke-width="2.00"/>
<text x="1188.33" y="273.60" font-size="16.30" font-weight="normal" fill="#e4e4e4" textLength="24.25" lengthAdjust="spacingAndGlyphs">2,2</text>
<line x1="1212.50" y1="221.80" x2="1218.50" y2="221.80" stroke="#dedede" stroke-width="2.00"/>
<text x="1187.98" y="228.00" font-size="16.30" font-weight="normal" fill="#e4e4e4" textLength="24.25" lengthAdjust="spacingAndGlyphs">2,4</text>
<line x1="1220.00" y1="546.00" x2="1220.00" y2="551.50" stroke="#dedede" stroke-width="2.00"/>
<text x="1215.12" y="570.30" font-size="16.30" font-weight="normal" fill="#e4e4e4" textLength="9.70" lengthAdjust="spacingAndGlyphs">0</text>
<line x1="1285.95" y1="546.00" x2="1285.95" y2="551.50" stroke="#dedede" stroke-width="2.00"/>
<text x="1275.92" y="570.30" font-size="16.30" font-weight="normal" fill="#e4e4e4" textLength="19.40" lengthAdjust="spacingAndGlyphs">10</text>
<line x1="1351.90" y1="546.00" x2="1351.90" y2="551.50" stroke="#dedede" stroke-width="2.00"/>
<text x="1342.09" y="570.30" font-size="16.30" font-weight="normal" fill="#e4e4e4" textLength="19.40" lengthAdjust="spacingAndGlyphs">20</text>
<line x1="1417.85" y1="546.00" x2="1417.85" y2="551.50" stroke="#dedede" stroke-width="2.00"/>
<text x="1408.13" y="570.30" font-size="16.30" font-weight="normal" fill="#e4e4e4" textLength="19.40" lengthAdjust="spacingAndGlyphs">30</text>
<line x1="1483.80" y1="546.00" x2="1483.80" y2="551.50" stroke="#dedede" stroke-width="2.00"/>
<text x="1474.25" y="570.30" font-size="16.30" font-weight="normal" fill="#e4e4e4" textLength="19.40" lengthAdjust="spacingAndGlyphs">40</text>
<line x1="1549.75" y1="546.00" x2="1549.75" y2="551.50" stroke="#dedede" stroke-width="2.00"/>
<text x="1540.03" y="570.30" font-size="16.30" font-weight="normal" fill="#e4e4e4" textLength="19.40" lengthAdjust="spacingAndGlyphs">50</text>
<line x1="1615.70" y1="546.00" x2="1615.70" y2="551.50" stroke="#dedede" stroke-width="2.00"/>
<text x="1605.89" y="570.30" font-size="16.30" font-weight="normal" fill="#e4e4e4" textLength="19.40" lengthAdjust="spacingAndGlyphs">60</text>
<line x1="1681.65" y1="546.00" x2="1681.65" y2="551.50" stroke="#dedede" stroke-width="2.00"/>
<text x="1671.84" y="570.30" font-size="16.30" font-weight="normal" fill="#e4e4e4" textLength="19.40" lengthAdjust="spacingAndGlyphs">70</text>
<line x1="1747.60" y1="546.00" x2="1747.60" y2="551.50" stroke="#dedede" stroke-width="2.00"/>
<text x="1737.83" y="570.30" font-size="16.30" font-weight="normal" fill="#e4e4e4" textLength="19.40" lengthAdjust="spacingAndGlyphs">80</text>
<line x1="1813.55" y1="546.00" x2="1813.55" y2="551.50" stroke="#dedede" stroke-width="2.00"/>
<text x="1803.78" y="570.30" font-size="16.30" font-weight="normal" fill="#e4e4e4" textLength="19.40" lengthAdjust="spacingAndGlyphs">90</text>
<line x1="1879.50" y1="546.00" x2="1879.50" y2="551.50" stroke="#dedede" stroke-width="2.00"/>
<text x="1864.63" y="570.30" font-size="16.30" font-weight="normal" fill="#e4e4e4" textLength="29.10" lengthAdjust="spacingAndGlyphs">100</text>
<text x="100.50" y="618.00" font-size="34.80" font-weight="normal" fill="#f4f4f4" textLength="248.54" lengthAdjust="spacingAndGlyphs">Avg dE2000: 1,2</text>
<text x="573.40" y="618.00" font-size="34.80" font-weight="normal" fill="#f4f4f4" textLength="218.21" lengthAdjust="spacingAndGlyphs">Avg CCT: 6482</text>
<text x="1002.86" y="618.00" font-size="34.80" font-weight="normal" fill="#f4f4f4" textLength="319.40" lengthAdjust="spacingAndGlyphs">Contrast Ratio: 1366</text>
<text x="1497.30" y="617.70" font-size="34.80" font-weight="normal" fill="#f4f4f4" textLength="293.95" lengthAdjust="spacingAndGlyphs">Total Gamma: 2,07</text>
<rect x="1.00" y="641.00" width="1918.00" height="150.00" fill="#000000"/>
<rect x="283.00" y="641.00" width="1470.00" height="150.00" fill="#030303"/>
<rect x="308.50" y="648.8" width="111.00" height="115.6" fill="rgb(6,6,6)"/>
<rect x="308.50" y="706.6" width="111.00" height="57.8" fill="rgb(0,0,0)"/>
<rect x="308.50" y="648.8" width="111.00" height="115.6" fill="none" stroke="#f4f4f4" stroke-width="2"/>
<text x="360.02" y="781.60" font-size="14.20" font-weight="normal" fill="#f0f0f0" textLength="7.90" lengthAdjust="spacingAndGlyphs">0</text>
<rect x="440.65" y="648.8" width="111.00" height="115.6" fill="rgb(26,26,26)"/>
<rect x="440.65" y="706.6" width="111.00" height="57.8" fill="rgb(28,28,28)"/>
<rect x="440.65" y="648.8" width="111.00" height="115.6" fill="none" stroke="#f4f4f4" stroke-width="2"/>
<text x="487.98" y="781.60" font-size="14.20" font-weight="normal" fill="#f0f0f0" textLength="15.80" lengthAdjust="spacingAndGlyphs">10</text>
<rect x="572.80" y="648.8" width="111.00" height="115.6" fill="rgb(51,51,51)"/>
<rect x="572.80" y="706.6" width="111.00" height="57.8" fill="rgb(51,51,51)"/>
<rect x="572.80" y="648.8" width="111.00" height="115.6" fill="none" stroke="#f4f4f4" stroke-width="2"/>
<text x="620.31" y="781.60" font-size="14.20" font-weight="normal" fill="#f0f0f0" textLength="15.80" lengthAdjust="spacingAndGlyphs">20</text>
<rect x="704.95" y="648.8" width="111.00" height="115.6" fill="rgb(78,78,78)"/>
<rect x="704.95" y="706.6" width="111.00" height="57.8" fill="rgb(79,79,79)"/>
<rect x="704.95" y="648.8" width="111.00" height="115.6" fill="none" stroke="#f4f4f4" stroke-width="2"/>
<text x="752.53" y="781.60" font-size="14.20" font-weight="normal" fill="#f0f0f0" textLength="15.80" lengthAdjust="spacingAndGlyphs">30</text>
<rect x="837.10" y="648.8" width="111.00" height="115.6" fill="rgb(106,106,106)"/>
<rect x="837.10" y="706.6" width="111.00" height="57.8" fill="rgb(106,106,106)"/>
<rect x="837.10" y="648.8" width="111.00" height="115.6" fill="none" stroke="#f4f4f4" stroke-width="2"/>
<text x="884.83" y="781.60" font-size="14.20" font-weight="normal" fill="#f0f0f0" textLength="15.80" lengthAdjust="spacingAndGlyphs">40</text>
<rect x="969.25" y="648.8" width="111.00" height="115.6" fill="rgb(135,135,135)"/>
<rect x="969.25" y="706.6" width="111.00" height="57.8" fill="rgb(128,128,128)"/>
<rect x="969.25" y="648.8" width="111.00" height="115.6" fill="none" stroke="#f4f4f4" stroke-width="2"/>
<text x="1016.83" y="781.60" font-size="14.20" font-weight="normal" fill="#f0f0f0" textLength="15.80" lengthAdjust="spacingAndGlyphs">50</text>
<rect x="1101.40" y="648.8" width="111.00" height="115.6" fill="rgb(161,161,161)"/>
<rect x="1101.40" y="706.6" width="111.00" height="57.8" fill="rgb(156,156,156)"/>
<rect x="1101.40" y="648.8" width="111.00" height="115.6" fill="none" stroke="#f4f4f4" stroke-width="2"/>
<text x="1148.91" y="781.60" font-size="14.20" font-weight="normal" fill="#f0f0f0" textLength="15.80" lengthAdjust="spacingAndGlyphs">60</text>
<rect x="1233.55" y="648.8" width="111.00" height="115.6" fill="rgb(184,184,184)"/>
<rect x="1233.55" y="706.6" width="111.00" height="57.8" fill="rgb(179,179,179)"/>
<rect x="1233.55" y="648.8" width="111.00" height="115.6" fill="none" stroke="#f4f4f4" stroke-width="2"/>
<text x="1281.06" y="781.60" font-size="14.20" font-weight="normal" fill="#f0f0f0" textLength="15.80" lengthAdjust="spacingAndGlyphs">70</text>
<rect x="1365.70" y="648.8" width="111.00" height="115.6" fill="rgb(211,211,211)"/>
<rect x="1365.70" y="706.6" width="111.00" height="57.8" fill="rgb(205,205,205)"/>
<rect x="1365.70" y="648.8" width="111.00" height="115.6" fill="none" stroke="#f4f4f4" stroke-width="2"/>
<text x="1413.25" y="781.60" font-size="14.20" font-weight="normal" fill="#f0f0f0" textLength="15.80" lengthAdjust="spacingAndGlyphs">80</text>
<rect x="1497.85" y="648.8" width="112.00" height="115.6" fill="rgb(236,236,236)"/>
<rect x="1497.85" y="706.6" width="112.00" height="57.8" fill="rgb(230,230,230)"/>
<rect x="1497.85" y="648.8" width="112.00" height="115.6" fill="none" stroke="#f4f4f4" stroke-width="2"/>
<text x="1545.90" y="781.60" font-size="14.20" font-weight="normal" fill="#f0f0f0" textLength="15.80" lengthAdjust="spacingAndGlyphs">90</text>
<rect x="1630.00" y="648.8" width="112.00" height="115.6" fill="rgb(255,255,255)"/>
<rect x="1630.00" y="706.6" width="112.00" height="57.8" fill="rgb(255,255,255)"/>
<rect x="1630.00" y="648.8" width="112.00" height="115.6" fill="none" stroke="#f4f4f4" stroke-width="2"/>
<text x="1673.89" y="781.60" font-size="14.20" font-weight="normal" fill="#f0f0f0" textLength="23.69" lengthAdjust="spacingAndGlyphs">100</text>
<g transform="translate(298.8 673) rotate(-90)"><text x="-18.97" y="0.00" font-size="14.00" font-weight="normal" fill="#f0f0f0" textLength="38.91" lengthAdjust="spacingAndGlyphs">Actual</text></g>
<g transform="translate(298.8 739.2) rotate(-90)"><text x="-19.53" y="0.00" font-size="14.00" font-weight="normal" fill="#f0f0f0" textLength="38.91" lengthAdjust="spacingAndGlyphs">Target</text></g>
<text x="16.26" y="853.20" font-size="35.30" font-weight="normal" fill="#f4f4f4" textLength="254.99" lengthAdjust="spacingAndGlyphs">Current Reading</text>
<text x="17.01" y="901.80" font-size="29.20" font-weight="normal" fill="#f4f4f4" textLength="118.97" lengthAdjust="spacingAndGlyphs">x: 0,3141</text>
<text x="17.36" y="947.80" font-size="29.20" font-weight="normal" fill="#f4f4f4" textLength="119.18" lengthAdjust="spacingAndGlyphs">y: 0,3295</text>
<text x="17.57" y="996.00" font-size="29.20" font-weight="normal" fill="#f4f4f4" textLength="128.17" lengthAdjust="spacingAndGlyphs">fL: 207,42</text>
<text x="16.29" y="1043.30" font-size="29.20" font-weight="normal" fill="#f4f4f4" textLength="185.51" lengthAdjust="spacingAndGlyphs">cd/m²: 710,67</text>
<rect x="377.00" y="817.00" width="336.00" height="246.00" fill="#1d1d1d"/>
<rect x="385.00" y="824.00" width="321.00" height="235.00" fill="#333333"/>
<rect x="428.40" y="827.00" width="273.80" height="4.00" fill="url(#gCie0)"/>
<rect x="428.40" y="831.00" width="273.80" height="4.00" fill="url(#gCie1)"/>
<rect x="428.40" y="835.00" width="273.80" height="4.00" fill="url(#gCie2)"/>
<rect x="428.40" y="839.00" width="273.80" height="4.00" fill="url(#gCie3)"/>
<rect x="428.40" y="843.00" width="273.80" height="4.00" fill="url(#gCie4)"/>
<rect x="428.40" y="847.00" width="273.80" height="4.00" fill="url(#gCie5)"/>
<rect x="428.40" y="851.00" width="273.80" height="4.00" fill="url(#gCie6)"/>
<rect x="428.40" y="855.00" width="273.80" height="4.00" fill="url(#gCie7)"/>
<rect x="428.40" y="859.00" width="273.80" height="4.00" fill="url(#gCie8)"/>
<rect x="428.40" y="863.00" width="273.80" height="4.00" fill="url(#gCie9)"/>
<rect x="428.40" y="867.00" width="273.80" height="4.00" fill="url(#gCie10)"/>
<rect x="428.40" y="871.00" width="273.80" height="4.00" fill="url(#gCie11)"/>
<rect x="428.40" y="875.00" width="273.80" height="4.00" fill="url(#gCie12)"/>
<rect x="428.40" y="879.00" width="273.80" height="4.00" fill="url(#gCie13)"/>
<rect x="428.40" y="883.00" width="273.80" height="4.00" fill="url(#gCie14)"/>
<rect x="428.40" y="887.00" width="273.80" height="4.00" fill="url(#gCie15)"/>
<rect x="428.40" y="891.00" width="273.80" height="4.00" fill="url(#gCie16)"/>
<rect x="428.40" y="895.00" width="273.80" height="4.00" fill="url(#gCie17)"/>
<rect x="428.40" y="899.00" width="273.80" height="4.00" fill="url(#gCie18)"/>
<rect x="428.40" y="903.00" width="273.80" height="4.00" fill="url(#gCie19)"/>
<rect x="428.40" y="907.00" width="273.80" height="4.00" fill="url(#gCie20)"/>
<rect x="428.40" y="911.00" width="273.80" height="4.00" fill="url(#gCie21)"/>
<rect x="428.40" y="915.00" width="273.80" height="4.00" fill="url(#gCie22)"/>
<rect x="428.40" y="919.00" width="273.80" height="4.00" fill="url(#gCie23)"/>
<rect x="428.40" y="923.00" width="273.80" height="4.00" fill="url(#gCie24)"/>
<rect x="428.40" y="927.00" width="273.80" height="4.00" fill="url(#gCie25)"/>
<rect x="428.40" y="931.00" width="273.80" height="4.00" fill="url(#gCie26)"/>
<rect x="428.40" y="935.00" width="273.80" height="4.00" fill="url(#gCie27)"/>
<rect x="428.40" y="939.00" width="273.80" height="4.00" fill="url(#gCie28)"/>
<rect x="428.40" y="943.00" width="273.80" height="4.00" fill="url(#gCie29)"/>
<rect x="428.40" y="947.00" width="273.80" height="4.00" fill="url(#gCie30)"/>
<rect x="428.40" y="951.00" width="273.80" height="4.00" fill="url(#gCie31)"/>
<rect x="428.40" y="955.00" width="273.80" height="4.00" fill="url(#gCie32)"/>
<rect x="428.40" y="959.00" width="273.80" height="4.00" fill="url(#gCie33)"/>
<rect x="428.40" y="963.00" width="273.80" height="4.00" fill="url(#gCie34)"/>
<rect x="428.40" y="967.00" width="273.80" height="4.00" fill="url(#gCie35)"/>
<rect x="428.40" y="971.00" width="273.80" height="4.00" fill="url(#gCie36)"/>
<rect x="428.40" y="975.00" width="273.80" height="4.00" fill="url(#gCie37)"/>
<rect x="428.40" y="979.00" width="273.80" height="4.00" fill="url(#gCie38)"/>
<rect x="428.40" y="983.00" width="273.80" height="4.00" fill="url(#gCie39)"/>
<rect x="428.40" y="987.00" width="273.80" height="4.00" fill="url(#gCie40)"/>
<rect x="428.40" y="991.00" width="273.80" height="4.00" fill="url(#gCie41)"/>
<rect x="428.40" y="995.00" width="273.80" height="4.00" fill="url(#gCie42)"/>
<rect x="428.40" y="999.00" width="273.80" height="4.00" fill="url(#gCie43)"/>
<rect x="428.40" y="1003.00" width="273.80" height="4.00" fill="url(#gCie44)"/>
<rect x="428.40" y="1007.00" width="273.80" height="4.00" fill="url(#gCie45)"/>
<rect x="428.40" y="1011.00" width="273.80" height="4.00" fill="url(#gCie46)"/>
<rect x="428.40" y="1015.00" width="273.80" height="4.00" fill="url(#gCie47)"/>
<rect x="428.40" y="1019.00" width="273.80" height="4.00" fill="url(#gCie48)"/>
<rect x="428.40" y="1023.00" width="273.80" height="3.00" fill="url(#gCie49)"/>
<rect x="428.40" y="827.60" width="273.80" height="198.40" fill="none" stroke="#a0a0a0" stroke-width="1.6"/>
<path d="M463.7,1026 L701,861" stroke="#000" stroke-width="3.6" fill="none"/>
<circle cx="561.2" cy="945.4" r="5.2" fill="#1a1a1a" stroke="#000" stroke-width="1"/>
<circle cx="567.5" cy="929" r="4.6" fill="#888" stroke="#222" stroke-width="1"/>
<rect x="557" y="918.6" width="15.4" height="16.6" fill="none" stroke="#111" stroke-width="1.6"/>
<circle cx="577.6" cy="919.9" r="5" fill="#707070" stroke="#222" stroke-width="1"/>
<circle cx="572.3" cy="923.1" r="4.6" fill="#fafafa" stroke="#222" stroke-width="1"/>
<circle cx="561.2" cy="926.6" r="4.6" fill="#d8d8d8" stroke="#222" stroke-width="1"/>
<line x1="421.00" y1="843.30" x2="427.60" y2="843.30" stroke="#e0e0e0" stroke-width="1.60"/>
<text x="387.27" y="850.10" font-size="16.30" font-weight="normal" fill="#e4e4e4" textLength="33.95" lengthAdjust="spacingAndGlyphs">0,35</text>
<line x1="421.00" y1="884.20" x2="427.60" y2="884.20" stroke="#e0e0e0" stroke-width="1.60"/>
<text x="387.10" y="889.82" font-size="16.30" font-weight="normal" fill="#e4e4e4" textLength="33.95" lengthAdjust="spacingAndGlyphs">0,34</text>
<line x1="421.00" y1="923.80" x2="427.60" y2="923.80" stroke="#e0e0e0" stroke-width="1.60"/>
<text x="387.27" y="929.54" font-size="16.30" font-weight="normal" fill="#e4e4e4" textLength="33.95" lengthAdjust="spacingAndGlyphs">0,33</text>
<line x1="421.00" y1="962.10" x2="427.60" y2="962.10" stroke="#e0e0e0" stroke-width="1.60"/>
<text x="387.45" y="969.26" font-size="16.30" font-weight="normal" fill="#e4e4e4" textLength="33.95" lengthAdjust="spacingAndGlyphs">0,32</text>
<line x1="421.00" y1="1001.70" x2="427.60" y2="1001.70" stroke="#e0e0e0" stroke-width="1.60"/>
<text x="387.36" y="1008.98" font-size="16.30" font-weight="normal" fill="#e4e4e4" textLength="33.95" lengthAdjust="spacingAndGlyphs">0,31</text>
<line x1="439.50" y1="1026.80" x2="439.50" y2="1033.00" stroke="#e0e0e0" stroke-width="1.60"/>
<text x="422.58" y="1050.10" font-size="16.30" font-weight="normal" fill="#e4e4e4" textLength="33.95" lengthAdjust="spacingAndGlyphs">0,29</text>
<line x1="494.20" y1="1026.80" x2="494.20" y2="1033.00" stroke="#e0e0e0" stroke-width="1.60"/>
<text x="482.08" y="1050.10" font-size="16.30" font-weight="normal" fill="#e4e4e4" textLength="24.25" lengthAdjust="spacingAndGlyphs">0,3</text>
<line x1="548.90" y1="1026.80" x2="548.90" y2="1033.00" stroke="#e0e0e0" stroke-width="1.60"/>
<text x="531.98" y="1050.10" font-size="16.30" font-weight="normal" fill="#e4e4e4" textLength="33.95" lengthAdjust="spacingAndGlyphs">0,31</text>
<line x1="603.60" y1="1026.80" x2="603.60" y2="1033.00" stroke="#e0e0e0" stroke-width="1.60"/>
<text x="586.73" y="1050.10" font-size="16.30" font-weight="normal" fill="#e4e4e4" textLength="33.95" lengthAdjust="spacingAndGlyphs">0,32</text>
<line x1="658.30" y1="1026.80" x2="658.30" y2="1033.00" stroke="#e0e0e0" stroke-width="1.60"/>
<text x="641.34" y="1050.10" font-size="16.30" font-weight="normal" fill="#e4e4e4" textLength="33.95" lengthAdjust="spacingAndGlyphs">0,33</text>
<rect x="722.00" y="801.30" width="1104.50" height="241.20" fill="#000000"/>
<rect x="723.50" y="802.50" width="1101.50" height="16.10" fill="#2e2e2e"/>
<rect x="723.50" y="818.60" width="1101.50" height="15.40" fill="#131313"/>
<rect x="723.50" y="834.00" width="1101.50" height="29.75" fill="url(#gRowD)"/>
<text x="736.81" y="855.90" font-size="19.60" font-weight="bold" fill="#f6f6f6" textLength="74.06" lengthAdjust="spacingAndGlyphs">x: CIE31</text>
<text x="902.28" y="855.90" font-size="18.80" font-weight="normal" fill="#f0f0f0" textLength="44.99" lengthAdjust="spacingAndGlyphs">0,310</text>
<text x="986.58" y="855.90" font-size="18.80" font-weight="normal" fill="#f0f0f0" textLength="44.99" lengthAdjust="spacingAndGlyphs">0,312</text>
<text x="1070.88" y="855.90" font-size="18.80" font-weight="normal" fill="#f0f0f0" textLength="44.99" lengthAdjust="spacingAndGlyphs">0,313</text>
<text x="1155.18" y="855.90" font-size="18.80" font-weight="normal" fill="#f0f0f0" textLength="44.99" lengthAdjust="spacingAndGlyphs">0,313</text>
<text x="1239.48" y="855.90" font-size="18.80" font-weight="normal" fill="#f0f0f0" textLength="44.99" lengthAdjust="spacingAndGlyphs">0,315</text>
<text x="1323.78" y="855.90" font-size="18.80" font-weight="normal" fill="#f0f0f0" textLength="44.99" lengthAdjust="spacingAndGlyphs">0,313</text>
<text x="1408.08" y="855.90" font-size="18.80" font-weight="normal" fill="#f0f0f0" textLength="44.99" lengthAdjust="spacingAndGlyphs">0,313</text>
<text x="1492.38" y="855.90" font-size="18.80" font-weight="normal" fill="#f0f0f0" textLength="44.99" lengthAdjust="spacingAndGlyphs">0,313</text>
<text x="1576.68" y="855.90" font-size="18.80" font-weight="normal" fill="#f0f0f0" textLength="44.99" lengthAdjust="spacingAndGlyphs">0,313</text>
<text x="1660.98" y="855.90" font-size="18.80" font-weight="normal" fill="#f0f0f0" textLength="44.99" lengthAdjust="spacingAndGlyphs">0,312</text>
<text x="1745.28" y="855.90" font-size="18.80" font-weight="normal" fill="#f0f0f0" textLength="44.99" lengthAdjust="spacingAndGlyphs">0,314</text>
<rect x="723.50" y="863.75" width="1101.50" height="29.75" fill="url(#gRowL)"/>
<text x="736.81" y="885.65" font-size="19.60" font-weight="bold" fill="#f6f6f6" textLength="74.06" lengthAdjust="spacingAndGlyphs">y: CIE31</text>
<text x="902.28" y="885.65" font-size="18.80" font-weight="normal" fill="#f0f0f0" textLength="44.99" lengthAdjust="spacingAndGlyphs">0,284</text>
<text x="986.58" y="885.65" font-size="18.80" font-weight="normal" fill="#f0f0f0" textLength="44.99" lengthAdjust="spacingAndGlyphs">0,324</text>
<text x="1070.88" y="885.65" font-size="18.80" font-weight="normal" fill="#f0f0f0" textLength="44.99" lengthAdjust="spacingAndGlyphs">0,328</text>
<text x="1155.18" y="885.65" font-size="18.80" font-weight="normal" fill="#f0f0f0" textLength="44.99" lengthAdjust="spacingAndGlyphs">0,328</text>
<text x="1239.48" y="885.65" font-size="18.80" font-weight="normal" fill="#f0f0f0" textLength="44.99" lengthAdjust="spacingAndGlyphs">0,330</text>
<text x="1323.78" y="885.65" font-size="18.80" font-weight="normal" fill="#f0f0f0" textLength="44.99" lengthAdjust="spacingAndGlyphs">0,329</text>
<text x="1408.08" y="885.65" font-size="18.80" font-weight="normal" fill="#f0f0f0" textLength="44.99" lengthAdjust="spacingAndGlyphs">0,328</text>
<text x="1492.38" y="885.65" font-size="18.80" font-weight="normal" fill="#f0f0f0" textLength="44.99" lengthAdjust="spacingAndGlyphs">0,329</text>
<text x="1576.68" y="885.65" font-size="18.80" font-weight="normal" fill="#f0f0f0" textLength="44.99" lengthAdjust="spacingAndGlyphs">0,329</text>
<text x="1660.98" y="885.65" font-size="18.80" font-weight="normal" fill="#f0f0f0" textLength="44.99" lengthAdjust="spacingAndGlyphs">0,329</text>
<text x="1745.28" y="885.65" font-size="18.80" font-weight="normal" fill="#f0f0f0" textLength="44.99" lengthAdjust="spacingAndGlyphs">0,329</text>
<rect x="723.50" y="893.50" width="1101.50" height="29.75" fill="url(#gRowD)"/>
<text x="736.62" y="915.40" font-size="19.60" font-weight="bold" fill="#f6f6f6" textLength="12.52" lengthAdjust="spacingAndGlyphs">Y</text>
<text x="902.28" y="915.40" font-size="18.80" font-weight="normal" fill="#f0f0f0" textLength="44.99" lengthAdjust="spacingAndGlyphs">0,520</text>
<text x="986.58" y="915.40" font-size="18.80" font-weight="normal" fill="#f0f0f0" textLength="44.99" lengthAdjust="spacingAndGlyphs">5,446</text>
<text x="1070.70" y="915.40" font-size="18.80" font-weight="normal" fill="#f0f0f0" textLength="54.99" lengthAdjust="spacingAndGlyphs">22,445</text>
<text x="1155.18" y="915.40" font-size="18.80" font-weight="normal" fill="#f0f0f0" textLength="54.99" lengthAdjust="spacingAndGlyphs">50,894</text>
<text x="1239.39" y="915.40" font-size="18.80" font-weight="normal" fill="#f0f0f0" textLength="54.99" lengthAdjust="spacingAndGlyphs">99,355</text>
<text x="1323.15" y="915.40" font-size="18.80" font-weight="normal" fill="#f0f0f0" textLength="64.99" lengthAdjust="spacingAndGlyphs">163,903</text>
<text x="1407.90" y="915.40" font-size="18.80" font-weight="normal" fill="#f0f0f0" textLength="64.99" lengthAdjust="spacingAndGlyphs">243,362</text>
<text x="1492.38" y="915.40" font-size="18.80" font-weight="normal" fill="#f0f0f0" textLength="64.99" lengthAdjust="spacingAndGlyphs">339,305</text>
<text x="1577.04" y="915.40" font-size="18.80" font-weight="normal" fill="#f0f0f0" textLength="64.99" lengthAdjust="spacingAndGlyphs">457,182</text>
<text x="1660.98" y="915.40" font-size="18.80" font-weight="normal" fill="#f0f0f0" textLength="64.99" lengthAdjust="spacingAndGlyphs">594,018</text>
<text x="1745.10" y="915.40" font-size="18.80" font-weight="normal" fill="#f0f0f0" textLength="64.99" lengthAdjust="spacingAndGlyphs">710,666</text>
<rect x="723.50" y="923.25" width="1101.50" height="29.75" fill="url(#gRowL)"/>
<text x="736.81" y="945.15" font-size="19.60" font-weight="bold" fill="#f6f6f6" textLength="73.36" lengthAdjust="spacingAndGlyphs">Target Y</text>
<text x="902.28" y="945.15" font-size="18.80" font-weight="normal" fill="#f0f0f0" textLength="44.99" lengthAdjust="spacingAndGlyphs">0,000</text>
<text x="986.40" y="945.15" font-size="18.80" font-weight="normal" fill="#f0f0f0" textLength="44.99" lengthAdjust="spacingAndGlyphs">7,341</text>
<text x="1070.70" y="945.15" font-size="18.80" font-weight="normal" fill="#f0f0f0" textLength="54.99" lengthAdjust="spacingAndGlyphs">23,526</text>
<text x="1155.18" y="945.15" font-size="18.80" font-weight="normal" fill="#f0f0f0" textLength="54.99" lengthAdjust="spacingAndGlyphs">51,361</text>
<text x="1239.39" y="945.15" font-size="18.80" font-weight="normal" fill="#f0f0f0" textLength="54.99" lengthAdjust="spacingAndGlyphs">94,425</text>
<text x="1323.15" y="945.15" font-size="18.80" font-weight="normal" fill="#f0f0f0" textLength="64.99" lengthAdjust="spacingAndGlyphs">153,405</text>
<text x="1407.90" y="945.15" font-size="18.80" font-weight="normal" fill="#f0f0f0" textLength="64.99" lengthAdjust="spacingAndGlyphs">226,380</text>
<text x="1492.38" y="945.15" font-size="18.80" font-weight="normal" fill="#f0f0f0" textLength="64.99" lengthAdjust="spacingAndGlyphs">316,389</text>
<text x="1577.04" y="945.15" font-size="18.80" font-weight="normal" fill="#f0f0f0" textLength="63.66" lengthAdjust="spacingAndGlyphs">429,119</text>
<text x="1660.98" y="945.15" font-size="18.80" font-weight="normal" fill="#f0f0f0" textLength="64.99" lengthAdjust="spacingAndGlyphs">562,348</text>
<text x="1745.10" y="945.15" font-size="18.80" font-weight="normal" fill="#f0f0f0" textLength="64.99" lengthAdjust="spacingAndGlyphs">710,666</text>
<rect x="723.50" y="953.00" width="1101.50" height="29.75" fill="url(#gRowD)"/>
<text x="736.25" y="974.90" font-size="19.60" font-weight="bold" fill="#f6f6f6" textLength="148.06" lengthAdjust="spacingAndGlyphs">Gamma Log/Log</text>
<text x="901.65" y="974.90" font-size="18.80" font-weight="normal" fill="#f0f0f0" textLength="44.99" lengthAdjust="spacingAndGlyphs">1,278</text>
<text x="986.40" y="974.90" font-size="18.80" font-weight="normal" fill="#f0f0f0" textLength="44.99" lengthAdjust="spacingAndGlyphs">2,134</text>
<text x="1070.70" y="974.90" font-size="18.80" font-weight="normal" fill="#f0f0f0" textLength="44.99" lengthAdjust="spacingAndGlyphs">2,147</text>
<text x="1155.00" y="974.90" font-size="18.80" font-weight="normal" fill="#f0f0f0" textLength="44.99" lengthAdjust="spacingAndGlyphs">2,178</text>
<text x="1239.30" y="974.90" font-size="18.80" font-weight="normal" fill="#f0f0f0" textLength="44.99" lengthAdjust="spacingAndGlyphs">2,147</text>
<text x="1323.60" y="974.90" font-size="18.80" font-weight="normal" fill="#f0f0f0" textLength="44.99" lengthAdjust="spacingAndGlyphs">2,128</text>
<text x="1407.90" y="974.90" font-size="18.80" font-weight="normal" fill="#f0f0f0" textLength="44.99" lengthAdjust="spacingAndGlyphs">2,098</text>
<text x="1492.20" y="974.90" font-size="18.80" font-weight="normal" fill="#f0f0f0" textLength="44.99" lengthAdjust="spacingAndGlyphs">2,057</text>
<text x="1576.05" y="974.90" font-size="18.80" font-weight="normal" fill="#f0f0f0" textLength="44.99" lengthAdjust="spacingAndGlyphs">1,977</text>
<text x="1660.35" y="974.90" font-size="18.80" font-weight="normal" fill="#f0f0f0" textLength="44.99" lengthAdjust="spacingAndGlyphs">1,738</text>
<text x="1745.10" y="974.90" font-size="18.80" font-weight="normal" fill="#f0f0f0" textLength="44.99" lengthAdjust="spacingAndGlyphs">2,275</text>
<rect x="723.50" y="982.75" width="1101.50" height="29.75" fill="url(#gRowL)"/>
<text x="736.25" y="1004.65" font-size="19.60" font-weight="bold" fill="#f6f6f6" textLength="38.57" lengthAdjust="spacingAndGlyphs">CCT</text>
<text x="902.10" y="1004.65" font-size="18.80" font-weight="normal" fill="#f0f0f0" textLength="74.99" lengthAdjust="spacingAndGlyphs">7232,000</text>
<text x="986.40" y="1004.65" font-size="18.80" font-weight="normal" fill="#f0f0f0" textLength="74.99" lengthAdjust="spacingAndGlyphs">6573,000</text>
<text x="1070.70" y="1004.65" font-size="18.80" font-weight="normal" fill="#f0f0f0" textLength="73.66" lengthAdjust="spacingAndGlyphs">6511,000</text>
<text x="1155.00" y="1004.65" font-size="18.80" font-weight="normal" fill="#f0f0f0" textLength="74.99" lengthAdjust="spacingAndGlyphs">6491,000</text>
<text x="1239.30" y="1004.65" font-size="18.80" font-weight="normal" fill="#f0f0f0" textLength="74.99" lengthAdjust="spacingAndGlyphs">6369,000</text>
<text x="1323.60" y="1004.65" font-size="18.80" font-weight="normal" fill="#f0f0f0" textLength="74.99" lengthAdjust="spacingAndGlyphs">6474,000</text>
<text x="1407.90" y="1004.65" font-size="18.80" font-weight="normal" fill="#f0f0f0" textLength="74.99" lengthAdjust="spacingAndGlyphs">6486,000</text>
<text x="1492.20" y="1004.65" font-size="18.80" font-weight="normal" fill="#f0f0f0" textLength="74.99" lengthAdjust="spacingAndGlyphs">6468,000</text>
<text x="1576.50" y="1004.65" font-size="18.80" font-weight="normal" fill="#f0f0f0" textLength="74.99" lengthAdjust="spacingAndGlyphs">6488,000</text>
<text x="1660.80" y="1004.65" font-size="18.80" font-weight="normal" fill="#f0f0f0" textLength="74.99" lengthAdjust="spacingAndGlyphs">6531,000</text>
<text x="1745.10" y="1004.65" font-size="18.80" font-weight="normal" fill="#f0f0f0" textLength="74.99" lengthAdjust="spacingAndGlyphs">6425,000</text>
<rect x="723.50" y="1012.50" width="1101.50" height="29.75" fill="url(#gRowD)"/>
<text x="736.25" y="1034.40" font-size="19.60" font-weight="bold" fill="#f6f6f6" textLength="72.97" lengthAdjust="spacingAndGlyphs">ΔE 2000</text>
<text x="902.28" y="1034.40" font-size="18.80" font-weight="normal" fill="#f0f0f0" textLength="44.99" lengthAdjust="spacingAndGlyphs">0,806</text>
<text x="985.95" y="1034.40" font-size="18.80" font-weight="normal" fill="#f0f0f0" textLength="44.99" lengthAdjust="spacingAndGlyphs">1,595</text>
<text x="1070.88" y="1034.40" font-size="18.80" font-weight="normal" fill="#f0f0f0" textLength="44.99" lengthAdjust="spacingAndGlyphs">0,545</text>
<text x="1155.18" y="1034.40" font-size="18.80" font-weight="normal" fill="#f0f0f0" textLength="44.99" lengthAdjust="spacingAndGlyphs">0,581</text>
<text x="1238.85" y="1034.40" font-size="18.80" font-weight="normal" fill="#f0f0f0" textLength="44.99" lengthAdjust="spacingAndGlyphs">1,140</text>
<text x="1323.15" y="1034.40" font-size="18.80" font-weight="normal" fill="#f0f0f0" textLength="44.99" lengthAdjust="spacingAndGlyphs">1,573</text>
<text x="1407.45" y="1034.40" font-size="18.80" font-weight="normal" fill="#f0f0f0" textLength="44.99" lengthAdjust="spacingAndGlyphs">1,728</text>
<text x="1491.75" y="1034.40" font-size="18.80" font-weight="normal" fill="#f0f0f0" textLength="44.99" lengthAdjust="spacingAndGlyphs">1,626</text>
<text x="1576.05" y="1034.40" font-size="18.80" font-weight="normal" fill="#f0f0f0" textLength="44.99" lengthAdjust="spacingAndGlyphs">1,463</text>
<text x="1660.35" y="1034.40" font-size="18.80" font-weight="normal" fill="#f0f0f0" textLength="44.99" lengthAdjust="spacingAndGlyphs">1,234</text>
<text x="1745.28" y="1034.40" font-size="18.80" font-weight="normal" fill="#f0f0f0" textLength="44.99" lengthAdjust="spacingAndGlyphs">0,850</text>
<text x="935.94" y="825.00" font-size="16.20" font-weight="bold" fill="#f6f6f6" textLength="9.73" lengthAdjust="spacingAndGlyphs">0</text>
<text x="1015.21" y="825.00" font-size="16.20" font-weight="bold" fill="#f6f6f6" textLength="19.46" lengthAdjust="spacingAndGlyphs">10</text>
<text x="1099.73" y="825.00" font-size="16.20" font-weight="bold" fill="#f6f6f6" textLength="19.46" lengthAdjust="spacingAndGlyphs">20</text>
<text x="1184.12" y="825.00" font-size="16.20" font-weight="bold" fill="#f6f6f6" textLength="19.46" lengthAdjust="spacingAndGlyphs">30</text>
<text x="1268.51" y="825.00" font-size="16.20" font-weight="bold" fill="#f6f6f6" textLength="19.46" lengthAdjust="spacingAndGlyphs">40</text>
<text x="1352.68" y="825.00" font-size="16.20" font-weight="bold" fill="#f6f6f6" textLength="19.46" lengthAdjust="spacingAndGlyphs">50</text>
<text x="1436.93" y="825.00" font-size="16.20" font-weight="bold" fill="#f6f6f6" textLength="19.46" lengthAdjust="spacingAndGlyphs">60</text>
<text x="1521.19" y="825.00" font-size="16.20" font-weight="bold" fill="#f6f6f6" textLength="19.46" lengthAdjust="spacingAndGlyphs">70</text>
<text x="1605.58" y="825.00" font-size="16.20" font-weight="bold" fill="#f6f6f6" textLength="19.46" lengthAdjust="spacingAndGlyphs">80</text>
<text x="1689.83" y="825.00" font-size="16.20" font-weight="bold" fill="#f6f6f6" textLength="19.46" lengthAdjust="spacingAndGlyphs">90</text>
<text x="1769.06" y="825.00" font-size="16.20" font-weight="bold" fill="#f6f6f6" textLength="29.19" lengthAdjust="spacingAndGlyphs">100</text>
<rect x="1.00" y="1112.70" width="1917.00" height="51.50" fill="url(#gTool)"/>
<rect x="1.00" y="1164.20" width="1917.00" height="1.00" fill="#1c1c1c"/>
<rect x="1.00" y="1165.00" width="1917.00" height="1.00" fill="#6a6a6a"/>
<rect x="2.00" y="1112.8" width="125" height="51.5" rx="3" fill="url(#gBtnBody)" stroke="#505050" stroke-width="0.8"/>
<rect x="6.00" y="1117.2" width="117" height="30.2" rx="3" fill="rgb(0,0,0)" stroke="#5a5a5a" stroke-width="0.8"/>
<text x="61.73" y="1160.30" font-size="10.00" font-weight="bold" fill="#2e2e2e" textLength="5.56" lengthAdjust="spacingAndGlyphs">0</text>
<rect x="129.20" y="1112.8" width="125" height="51.5" rx="3" fill="url(#gBtnBody)" stroke="#505050" stroke-width="0.8"/>
<rect x="133.20" y="1117.2" width="117" height="30.2" rx="3" fill="rgb(26,26,26)" stroke="#5a5a5a" stroke-width="0.8"/>
<text x="186.05" y="1160.30" font-size="10.00" font-weight="bold" fill="#2e2e2e" textLength="11.12" lengthAdjust="spacingAndGlyphs">10</text>
<rect x="256.40" y="1112.8" width="125" height="51.5" rx="3" fill="url(#gBtnBody)" stroke="#505050" stroke-width="0.8"/>
<rect x="260.40" y="1117.2" width="117" height="30.2" rx="3" fill="rgb(51,51,51)" stroke="#5a5a5a" stroke-width="0.8"/>
<text x="313.37" y="1160.30" font-size="10.00" font-weight="bold" fill="#2e2e2e" textLength="11.12" lengthAdjust="spacingAndGlyphs">20</text>
<rect x="383.60" y="1112.8" width="125" height="51.5" rx="3" fill="url(#gBtnBody)" stroke="#505050" stroke-width="0.8"/>
<rect x="387.60" y="1117.2" width="117" height="30.2" rx="3" fill="rgb(77,77,77)" stroke="#5a5a5a" stroke-width="0.8"/>
<text x="440.62" y="1160.30" font-size="10.00" font-weight="bold" fill="#2e2e2e" textLength="11.12" lengthAdjust="spacingAndGlyphs">30</text>
<rect x="510.80" y="1112.8" width="125" height="51.5" rx="3" fill="url(#gBtnBody)" stroke="#505050" stroke-width="0.8"/>
<rect x="514.80" y="1117.2" width="117" height="30.2" rx="3" fill="rgb(102,102,102)" stroke="#5a5a5a" stroke-width="0.8"/>
<text x="567.88" y="1160.30" font-size="10.00" font-weight="bold" fill="#2e2e2e" textLength="11.12" lengthAdjust="spacingAndGlyphs">40</text>
<rect x="638.00" y="1112.8" width="125" height="51.5" rx="3" fill="url(#gBtnBody)" stroke="#505050" stroke-width="0.8"/>
<rect x="642.00" y="1117.2" width="117" height="30.2" rx="3" fill="rgb(128,128,128)" stroke="#5a5a5a" stroke-width="0.8"/>
<text x="695.00" y="1160.30" font-size="10.00" font-weight="bold" fill="#2e2e2e" textLength="11.12" lengthAdjust="spacingAndGlyphs">50</text>
<rect x="765.20" y="1112.8" width="125" height="51.5" rx="3" fill="url(#gBtnBody)" stroke="#505050" stroke-width="0.8"/>
<rect x="769.20" y="1117.2" width="117" height="30.2" rx="3" fill="rgb(153,153,153)" stroke="#5a5a5a" stroke-width="0.8"/>
<text x="822.18" y="1160.30" font-size="10.00" font-weight="bold" fill="#2e2e2e" textLength="11.12" lengthAdjust="spacingAndGlyphs">60</text>
<rect x="892.40" y="1112.8" width="125" height="51.5" rx="3" fill="url(#gBtnBody)" stroke="#505050" stroke-width="0.8"/>
<rect x="896.40" y="1117.2" width="117" height="30.2" rx="3" fill="rgb(179,179,179)" stroke="#5a5a5a" stroke-width="0.8"/>
<text x="949.35" y="1160.30" font-size="10.00" font-weight="bold" fill="#2e2e2e" textLength="11.12" lengthAdjust="spacingAndGlyphs">70</text>
<rect x="1019.60" y="1112.8" width="125" height="51.5" rx="3" fill="url(#gBtnBody)" stroke="#505050" stroke-width="0.8"/>
<rect x="1023.60" y="1117.2" width="117" height="30.2" rx="3" fill="rgb(204,204,204)" stroke="#5a5a5a" stroke-width="0.8"/>
<text x="1076.60" y="1160.30" font-size="10.00" font-weight="bold" fill="#2e2e2e" textLength="11.12" lengthAdjust="spacingAndGlyphs">80</text>
<rect x="1146.80" y="1112.8" width="125" height="51.5" rx="3" fill="url(#gBtnBody)" stroke="#505050" stroke-width="0.8"/>
<rect x="1150.80" y="1117.2" width="117" height="30.2" rx="3" fill="rgb(230,230,230)" stroke="#5a5a5a" stroke-width="0.8"/>
<text x="1203.78" y="1160.30" font-size="10.00" font-weight="bold" fill="#2e2e2e" textLength="11.12" lengthAdjust="spacingAndGlyphs">90</text>
<rect x="1274.00" y="1112.8" width="125.7" height="50.8" rx="3" fill="#343434"/>
<rect x="1275.20" y="1114" width="123.2" height="36.6" rx="4" fill="#1a1a1a"/>
<rect x="1279.20" y="1117.5" width="116.8" height="30.2" rx="3" fill="#ffffff"/>
<text x="1328.28" y="1160.30" font-size="10.00" font-weight="bold" fill="#ffffff" textLength="16.69" lengthAdjust="spacingAndGlyphs">100</text>
<rect x="1648.7" y="1113" width="40.2" height="14.6" rx="3" fill="url(#gCtl)"/>
<circle cx="1669" cy="1120" r="5" fill="url(#gCirc)"/>
<path d="M1665.5,1122 L1669,1118 L1672.5,1122 Z" fill="#222"/>
<rect x="1648.7" y="1128.4" width="40.2" height="35.6" rx="2" fill="url(#gCtl)"/>
<rect x="1656" y="1134" width="24.6" height="24" rx="3" fill="#9a9a9a" stroke="#222" stroke-width="2"/>
<rect x="1662.20" y="1141.00" width="12.00" height="12.00" fill="#111"/>
<rect x="1690.30" y="1113" width="37.3" height="24.8" fill="url(#gCtl)"/>
<circle cx="1708.90" cy="1125.6" r="8.4" fill="url(#gCirc)"/>
<rect x="1728.10" y="1113" width="37.3" height="24.8" fill="url(#gCtl)"/>
<circle cx="1746.70" cy="1125.6" r="8.4" fill="url(#gCirc)"/>
<rect x="1765.90" y="1113" width="37.3" height="24.8" fill="url(#gCtl)"/>
<circle cx="1784.50" cy="1125.6" r="8.4" fill="url(#gCirc)"/>
<rect x="1803.70" y="1113" width="37.3" height="24.8" fill="url(#gCtl)"/>
<circle cx="1822.30" cy="1125.6" r="8.4" fill="url(#gCirc)"/>
<rect x="1841.50" y="1113" width="37.3" height="24.8" fill="url(#gCtl)"/>
<circle cx="1860.10" cy="1125.6" r="8.4" fill="url(#gCirc)"/>
<rect x="1705.60" y="1122.60" width="6.60" height="6.30" fill="#262626"/>
<path d="M1744.9,1122 L1752,1125.9 L1744.9,1129.8 Z" fill="#262626"/>
<path d="M1782.8,1121.6 H1780.4 V1130.2 H1782.8 M1787,1121.6 H1789.4 V1130.2 H1787" fill="none" stroke="#262626" stroke-width="1.6"/>
<rect x="1783.90" y="1125.30" width="1.20" height="1.20" fill="#262626"/>
<rect x="1785.60" y="1125.30" width="1.20" height="1.20" fill="#262626"/>
<path d="M1822.9,1125.6 C1820.5,1122.4 1817.4,1123 1817.4,1125.6 C1817.4,1128.2 1820.5,1128.8 1822.9,1125.6 C1825.3,1122.4 1828.4,1123 1828.4,1125.6 C1828.4,1128.2 1825.3,1128.8 1822.9,1125.6 Z" fill="none" stroke="#262626" stroke-width="1.7"/>
<path d="M1856.8,1126.5 A3.8,3.8 0 0 1 1863,1123.2 M1864.6,1124.8 A3.8,3.8 0 0 1 1858.4,1128.1" fill="none" stroke="#262626" stroke-width="1.7"/>
<path d="M1861.8,1121.4 L1865,1121.6 L1864.4,1125 Z M1859.6,1129.9 L1856.4,1129.7 L1857,1126.3 Z" fill="#262626"/>
<rect x="1879.2" y="1113" width="38.8" height="24.8" fill="url(#gDarkBox)"/>
<circle cx="1898.4" cy="1125.6" r="7.2" fill="#383838"/>
<rect x="1690.3" y="1139.3" width="113" height="24.8" rx="2" fill="url(#gCtl)"/>
<rect x="1804.3" y="1139.3" width="113.5" height="24.8" rx="2" fill="url(#gCtl)"/>
<circle cx="1715.8" cy="1152" r="8" fill="url(#gCirc)"/>
<circle cx="1893.8" cy="1152" r="8" fill="url(#gCirc)"/>
<text x="1715.8" y="1156.5" font-size="13" font-weight="bold" fill="#222" text-anchor="middle">«</text>
<text x="1893.8" y="1156.5" font-size="13" font-weight="bold" fill="#222" text-anchor="middle">»</text>
<text x="1736.12" y="1158.20" font-size="18.80" font-weight="normal" fill="#222222" textLength="43.84" lengthAdjust="spacingAndGlyphs">Back</text>
<text x="1825.65" y="1158.20" font-size="18.80" font-weight="normal" fill="#222222" textLength="44.88" lengthAdjust="spacingAndGlyphs">Next</text></svg></body></html>
